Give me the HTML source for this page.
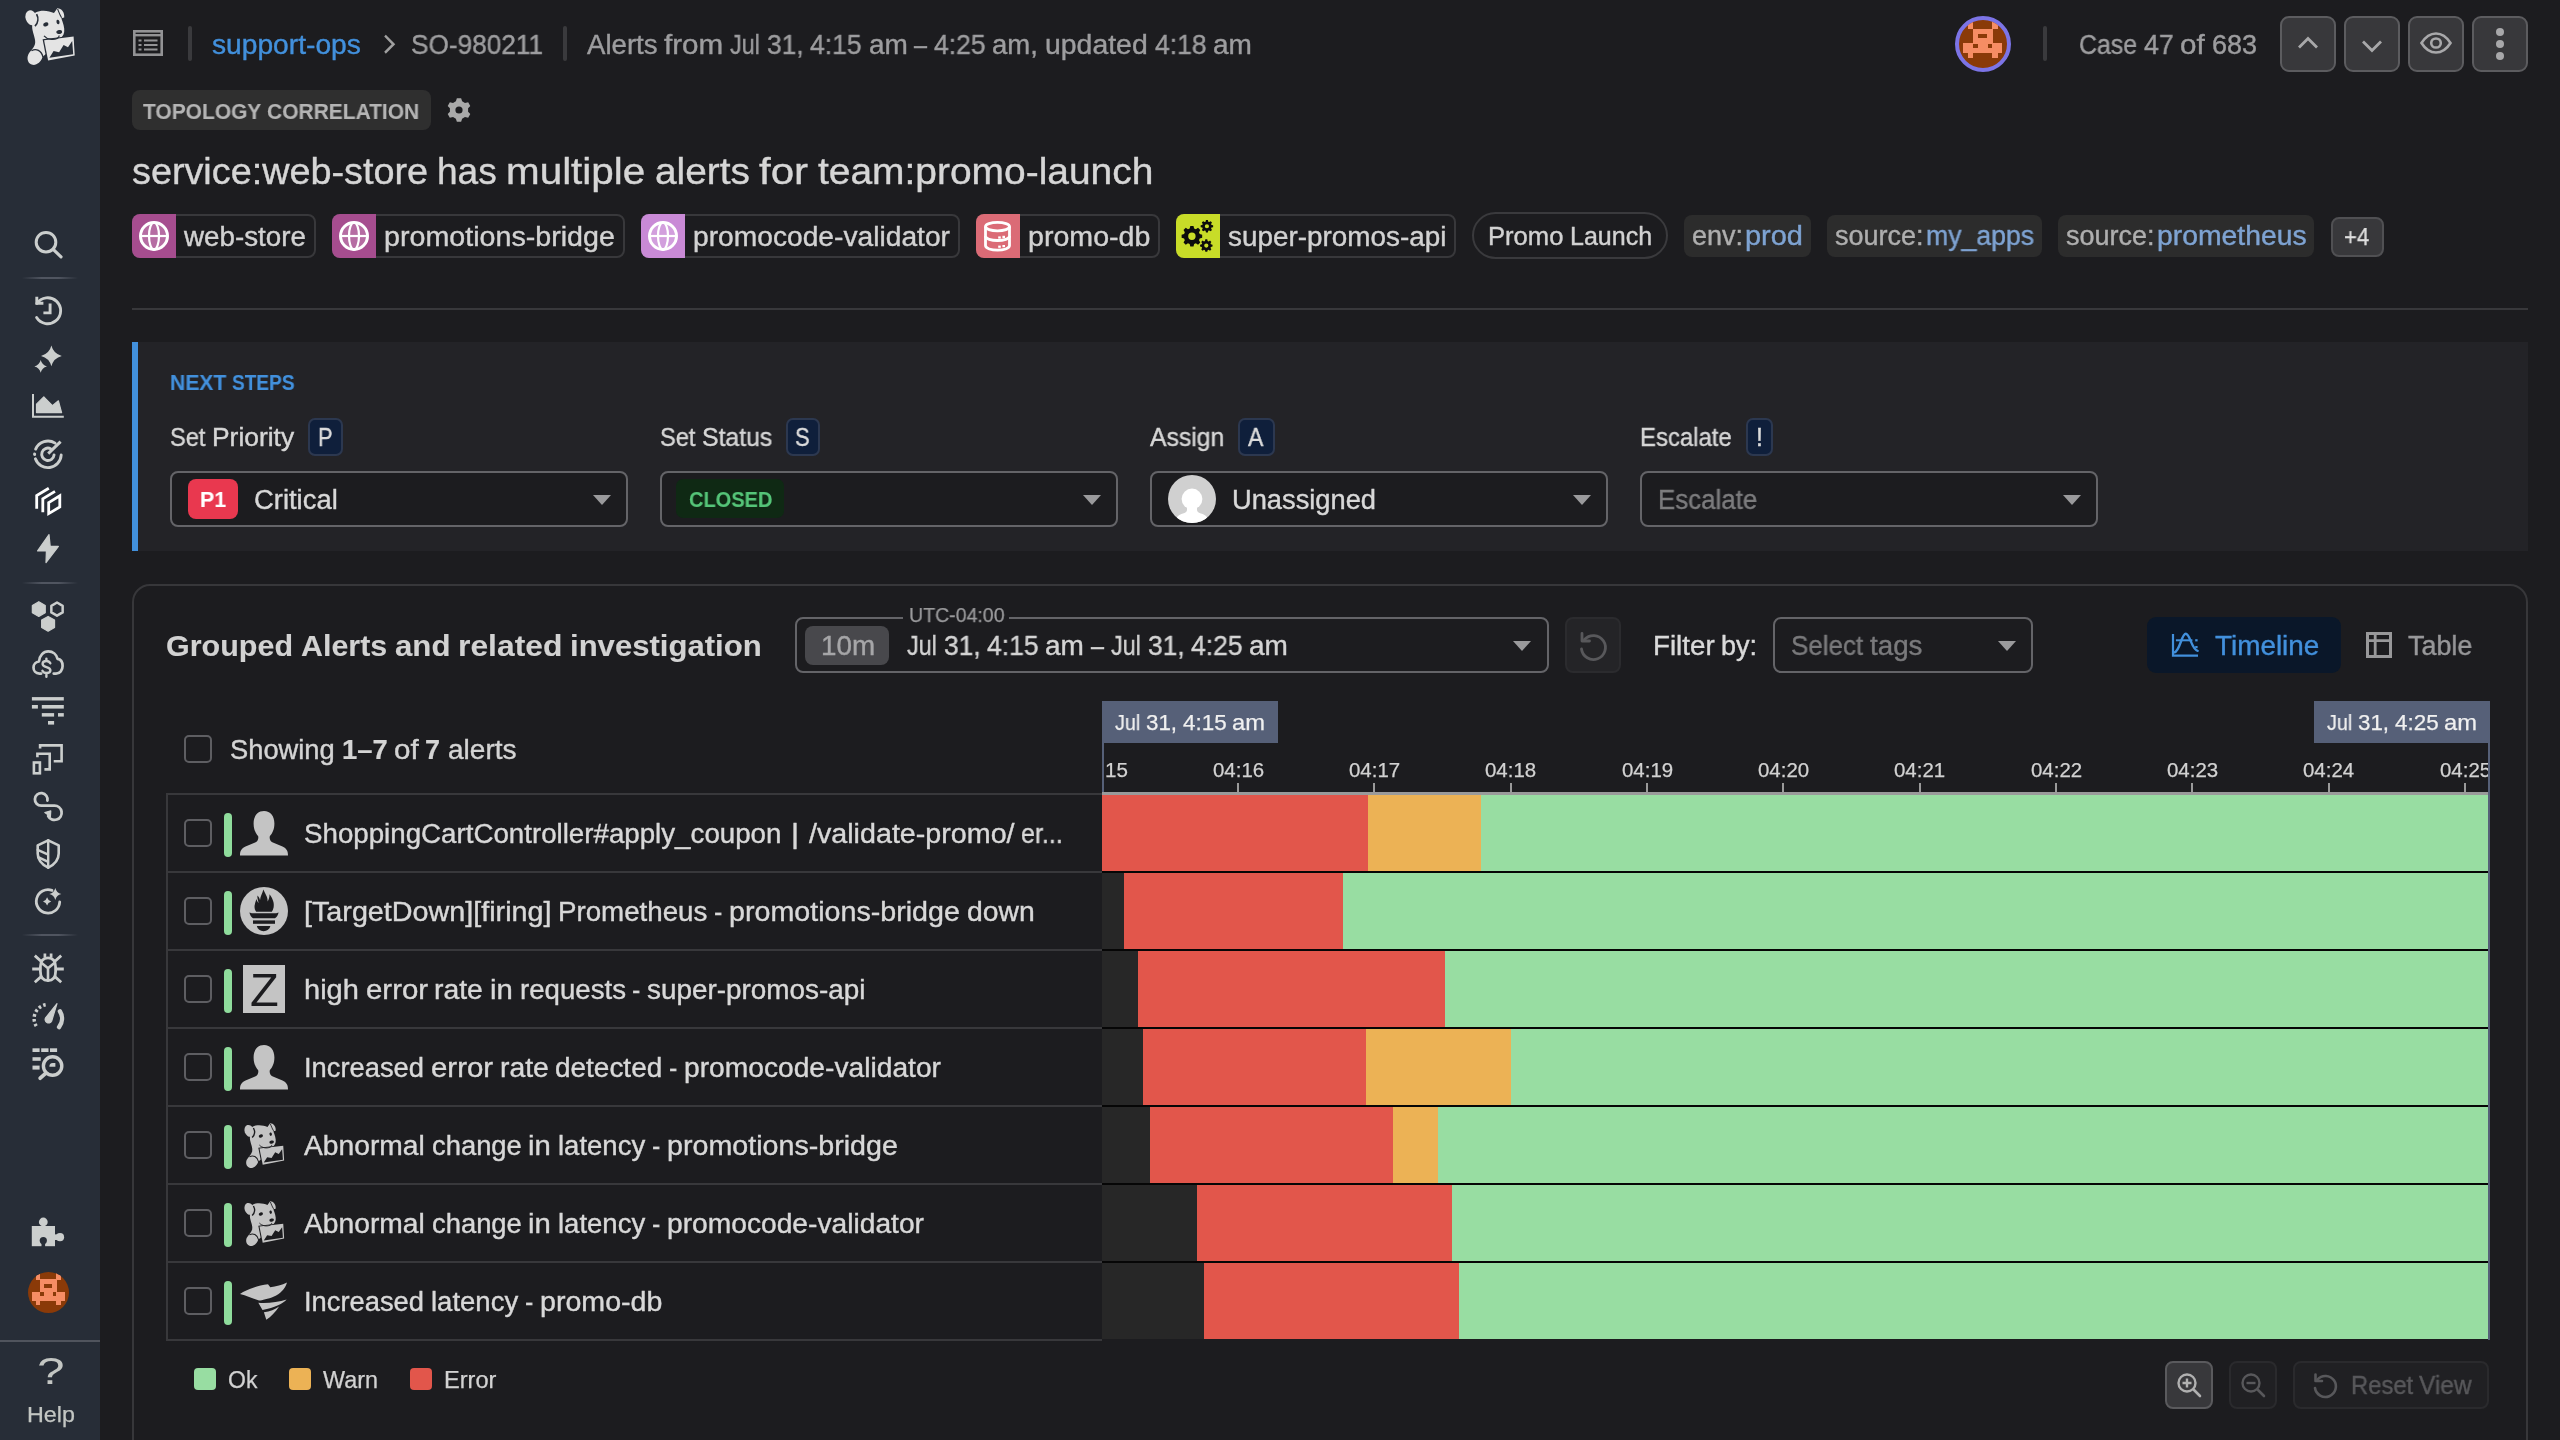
<!DOCTYPE html>
<html lang="en"><head><meta charset="utf-8"><title>Case SO-980211</title><style>
html,body{margin:0;padding:0;background:#1c1c1f;}
body{width:2560px;height:1440px;overflow:hidden;position:relative;font-family:"Liberation Sans",sans-serif;}
.t{position:absolute;white-space:nowrap;line-height:1;will-change:transform;-webkit-text-stroke:0.4px currentColor;}
.t b{-webkit-text-stroke:0.2px currentColor;}
.b{position:absolute;box-sizing:border-box;}
svg{overflow:visible;}
</style></head><body>
<div class="b" style="left:0px;top:0px;width:100px;height:1440px;background:#272d37;"></div>
<svg style="position:absolute;left:0;top:0" width="100" height="1440" viewBox="0 0 100 1440"><ellipse cx="31.3" cy="17.8" rx="5.7" ry="7.7" transform="rotate(-18 31.3 17.8)" fill="#e4e4e4"></ellipse><path d="M35.5 12.5 C41 9.5 49 10.5 54 13 L57.3 8.3 C61.5 8.3 64.8 12.5 64.2 17.6 L61.3 18.3 C63 23 64.8 28 64.2 32 C63.6 36 61 38.2 58 38.6 L47 41 L48 52 L42.5 57 C41 62 36.5 65.6 32.5 64.8 C28.3 64 26.3 59 28.3 54.5 C30 51 33.5 49 35 44 C36 40 33.5 35 32.5 30 C31.5 25 33 17 35.5 12.5 Z" fill="#e4e4e4"></path><path d="M36.6 14.2 C38.6 18 38.2 23 35 26.2" stroke="#272d37" stroke-width="1.7" fill="none"></path><path d="M31.5 50.8 C36 47.8 41.5 50.5 43 57" stroke="#272d37" stroke-width="1.3" fill="none"></path><path d="M57.6 9 C58.6 11.5 59.6 14.5 61.6 17.8" stroke="#272d37" stroke-width="1.1" fill="none"></path><path d="M42.6 39.2 L74.2 35.6 L75.4 56 L47 61.8 Z" fill="#272d37"></path><path d="M44.1 40.2 L73.6 36.6 L74.7 55.4 L48.1 60.6 Z" fill="#e4e4e4"></path><path d="M49.4 57.8 L53.6 51.1 L59.1 52.2 L63.6 45 L68 47.2 L72.2 41.1 L73.2 54.3 Z" fill="#272d37"></path><ellipse cx="45.8" cy="24.4" rx="2.7" ry="2" transform="rotate(-20 45.8 24.4)" fill="#272d37"></ellipse><ellipse cx="58" cy="22" rx="1.5" ry="2.2" transform="rotate(-15 58 22)" fill="#272d37"></ellipse><ellipse cx="59.2" cy="32" rx="2.9" ry="2" transform="rotate(-12 59.2 32)" fill="#272d37"></ellipse><path d="M44 35.8 C47 39.3 53 40.4 57.3 38.4 C58.6 37.8 59.2 36.8 59.2 35.6" stroke="#272d37" stroke-width="1.2" fill="none"></path><circle cx="46" cy="242.2" r="9.8" stroke="#cbcecd" fill="none" stroke-linecap="round" stroke-linejoin="round" stroke-width="3"></circle><path d="M53.2 249.4 L61 256.8" stroke="#cbcecd" fill="none" stroke-linecap="round" stroke-linejoin="round" stroke-width="3.2"></path><path d="M36.9 303.4 A13 13 0 1 1 36.6 317.6" stroke="#cbcecd" fill="none" stroke-linecap="round" stroke-linejoin="round" stroke-width="2.9"></path><path d="M36.8 296.8 V303.2 H43.4" stroke="#cbcecd" fill="none" stroke-linecap="butt" stroke-linejoin="miter" stroke-width="2.9"></path><path d="M50.1 303.4 V312.9 H43.4" stroke="#cbcecd" fill="none" stroke-linecap="butt" stroke-linejoin="miter" stroke-width="2.9"></path><path d="M51.4 345.5 Q53.48 353.82 61.8 355.9 Q53.48 357.98 51.4 366.29999999999995 Q49.32 357.98 41.0 355.9 Q49.32 353.82 51.4 345.5 Z" fill="#cbcecd" stroke="none"></path><path d="M40.7 360.09999999999997 Q41.96 365.14 47.0 366.4 Q41.96 367.66 40.7 372.7 Q39.44 367.66 34.400000000000006 366.4 Q39.44 365.14 40.7 360.09999999999997 Z" fill="#cbcecd" stroke="none"></path><path d="M33 393.9 V416.7 H63.8" stroke="#cbcecd" fill="none" stroke-linecap="butt" stroke-linejoin="miter" stroke-width="2"></path><path d="M36.5 412.6 V404.2 L43.8 396.8 L52.4 405.6 L58.4 400.8 L61.6 412.6 Z" fill="#cbcecd" stroke="#cbcecd" stroke-width="1.2" stroke-linejoin="round"></path><path d="M61.18 455.00 A13.3 13.3 0 0 1 35.40 458.85" stroke="#cbcecd" fill="none" stroke-linecap="round" stroke-linejoin="round" stroke-width="2.9"></path><path d="M35.66 449.10 A13.3 13.3 0 0 1 55.14 443.15" stroke="#cbcecd" fill="none" stroke-linecap="round" stroke-linejoin="round" stroke-width="2.9"></path><path d="M34.60 454.53 A13.3 13.3 0 0 1 34.60 454.07" stroke="#cbcecd" fill="none" stroke-linecap="round" stroke-linejoin="round" stroke-width="3"></path><path d="M54.07 454.95 A6.2 6.2 0 1 1 50.62 448.73" stroke="#cbcecd" fill="none" stroke-linecap="round" stroke-linejoin="round" stroke-width="2.9"></path><path d="M48.199999999999996 453.7 L60.6 441.7" stroke="#cbcecd" fill="none" stroke-linecap="butt" stroke-linejoin="miter" stroke-width="3"></path><path d="M36.7 508.8 V495.6 L48.8 488.2" stroke="#ffffff" fill="none" stroke-linecap="butt" stroke-linejoin="miter" stroke-width="2.8"></path><path d="M42.8 512.2 V498.8 L55 491.4" stroke="#ffffff" fill="none" stroke-linecap="butt" stroke-linejoin="miter" stroke-width="2.8"></path><path d="M48.7 502.6 L59.8 495.8 V507 L48.7 513.6 Z" stroke="#ffffff" fill="none" stroke-linecap="butt" stroke-linejoin="miter" stroke-width="2.8"></path><path d="M49 534.6 L37.6 550.9 H46.4 L46 562.6 L58.4 546.4 H50.2 Z" fill="#cbcecd" stroke="#cbcecd" stroke-width="1.2" stroke-linejoin="round"></path><path d="M38.80 601.70 L45.25 605.40 L45.25 612.80 L38.80 616.50 L32.35 612.80 L32.35 605.40 Z" fill="#cbcecd" stroke="#cbcecd" stroke-width="1.2" stroke-linejoin="round"></path><path d="M57.00 602.50 L62.65 605.80 L62.65 612.40 L57.00 615.70 L51.35 612.40 L51.35 605.80 Z" stroke="#cbcecd" fill="none" stroke-linecap="round" stroke-linejoin="round" stroke-width="2.5"></path><path d="M48.10 616.40 L54.55 620.10 L54.55 627.50 L48.10 631.20 L41.65 627.50 L41.65 620.10 Z" fill="#cbcecd" stroke="#cbcecd" stroke-width="1.2" stroke-linejoin="round"></path><path d="M41.2 673.6 H39.5 C35.5 673.6 33.5 670.6 33.5 667.6 C33.5 664 36 661.8 39 661.5 C39.5 655.5 43.5 651.4 48.3 651.4 C53 651.4 56.5 654.5 57.5 658.8 C61 659.3 62.6 662.5 62.6 666 C62.6 670 60 673.6 56 673.6 H53.7" stroke="#cbcecd" fill="none" stroke-linecap="round" stroke-linejoin="round" stroke-width="2.7"></path><path d="M50.3 663.3 C49.5 661.6 48 661 46.4 661 C44 661 42.6 662.3 42.6 664 C42.6 668 50.4 666.1 50.4 670.2 C50.4 672 48.8 673 46.4 673 C44.6 673 43.2 672.3 42.4 670.8 M46.4 658.6 V661 M46.4 673 V676.8" stroke="#cbcecd" fill="none" stroke-linecap="round" stroke-linejoin="round" stroke-width="2.4"></path><rect x="31.9" y="697.1" width="31.9" height="3.4" fill="#cbcecd" stroke="none"></rect><rect x="31.9" y="705" width="6.0" height="3.6" fill="#cbcecd" stroke="none"></rect><rect x="41.8" y="705" width="22.0" height="3.6" fill="#cbcecd" stroke="none"></rect><rect x="41.8" y="713.1" width="12.3" height="3.5" fill="#cbcecd" stroke="none"></rect><rect x="58" y="713.1" width="5.8" height="3.5" fill="#cbcecd" stroke="none"></rect><rect x="48" y="721" width="6.1" height="3.6" fill="#cbcecd" stroke="none"></rect><path d="M40.1 748.6 V745.4 H61.6 V761.3 H53.7" stroke="#cbcecd" fill="none" stroke-linecap="butt" stroke-linejoin="miter" stroke-width="2.6"></path><path d="M37.4 757.3 V753.8 H49.7 V769.4 H44.4" stroke="#cbcecd" fill="none" stroke-linecap="butt" stroke-linejoin="miter" stroke-width="2.6"></path><rect x="33.9" y="762.5" width="6" height="10.8" stroke="#cbcecd" fill="none" stroke-linecap="butt" stroke-linejoin="miter" stroke-width="2.6"></rect><path d="M47.4 800.6 A6.3 6.3 0 1 0 41.2 805.7 H54.4 A7.1 7.1 0 1 1 48.2 816" stroke="#cbcecd" fill="none" stroke-linecap="round" stroke-linejoin="round" stroke-width="2.8"></path><path d="M44.8 812.6 L50.8 810.8 L50.4 816.6 Z" fill="#cbcecd" stroke="#cbcecd" stroke-width="1.2" stroke-linejoin="round"></path><path d="M48.2 840.3 L58.7 845.4 V853.5 C58.7 860 54.5 864.5 48.2 867.7 C41.9 864.5 37.7 860 37.7 853.5 V845.4 Z" stroke="#cbcecd" fill="none" stroke-linecap="round" stroke-linejoin="round" stroke-width="2.6"></path><path d="M48.2 840.3 V867.7 M37.7 849.8 L48.2 854.6 M38.2 857.2 L48.2 861.9" stroke="#cbcecd" fill="none" stroke-linecap="round" stroke-linejoin="round" stroke-width="2.4"></path><path d="M52 890.4 A11.7 11.7 0 1 0 59.7 902" stroke="#cbcecd" fill="none" stroke-linecap="round" stroke-linejoin="round" stroke-width="2.8"></path><path d="M55.3 888.1 Q56.50 892.90 61.3 894.1 Q56.50 895.30 55.3 900.1 Q54.10 895.30 49.3 894.1 Q54.10 892.90 55.3 888.1 Z" fill="#cbcecd" stroke="none"></path><path d="M47.1 897.3 Q47.92 900.58 51.2 901.4 Q47.92 902.22 47.1 905.5 Q46.28 902.22 43.0 901.4 Q46.28 900.58 47.1 897.3 Z" fill="#cbcecd" stroke="none"></path><path d="M48 957.9 C53 957.9 55.6 961.5 55.6 967 V971.5 C55.6 977 53 980.6 48 980.6 C43 980.6 40.4 977 40.4 971.5 V967 C40.4 961.5 43 957.9 48 957.9 Z" stroke="#cbcecd" fill="none" stroke-linecap="round" stroke-linejoin="round" stroke-width="2.8"></path><path d="M42.2 963.4 L48 968.2 L53.8 963.4 M48 968.2 V980.4" stroke="#cbcecd" fill="none" stroke-linecap="round" stroke-linejoin="round" stroke-width="2.6"></path><path d="M44.9 953.4 V957.6 M51.1 953.4 V957.6" stroke="#cbcecd" fill="none" stroke-linecap="butt" stroke-linejoin="miter" stroke-width="2.7"></path><path d="M34.8 955.6 L41.6 961.8 M61.2 955.6 L54.4 961.8 M32.2 969 H39.6 M56.4 969 H63.8 M34.8 982.3 L41.4 976.4 M61.2 982.3 L54.6 976.4" stroke="#cbcecd" fill="none" stroke-linecap="butt" stroke-linejoin="miter" stroke-width="2.8"></path><path d="M36.24 1026.07 A14.1 14.1 0 0 1 46.24 1004.64" stroke="#cbcecd" fill="none" stroke-linecap="butt" stroke-linejoin="miter" stroke-width="3.4" stroke-dasharray="2.6 2.3"></path><path d="M59.90 1011.29 A13.8 13.8 0 0 1 59.07 1027.10" stroke="#cbcecd" fill="none" stroke-linecap="round" stroke-linejoin="round" stroke-width="4.4"></path><path d="M57 1003.6 L51.6 1021.2 A3.4 3.4 0 1 1 45.6 1017.8 Z" fill="#cbcecd" stroke="#cbcecd" stroke-width="1.2" stroke-linejoin="round"></path><rect x="32.5" y="1048.3" width="7.1" height="3.7" fill="#cbcecd" stroke="none"></rect><rect x="41.2" y="1048.3" width="7.3" height="3.7" fill="#cbcecd" stroke="none"></rect><rect x="50" y="1048.3" width="7.1" height="3.7" fill="#cbcecd" stroke="none"></rect><rect x="32.5" y="1057.2" width="8.2" height="3.6" fill="#cbcecd" stroke="none"></rect><rect x="32.5" y="1065.6" width="7.1" height="4.0" fill="#cbcecd" stroke="none"></rect><circle cx="52.6" cy="1066" r="9.2" stroke="#cbcecd" fill="none" stroke-linecap="round" stroke-linejoin="round" stroke-width="3.4"></circle><path d="M45.6 1073.4 L40.2 1078.2" stroke="#cbcecd" fill="none" stroke-linecap="round" stroke-linejoin="round" stroke-width="3.8"></path><path d="M49.4 1066.8 A3.6 3.6 0 0 1 52.8 1063 H55.4 V1066.8 Z" fill="#cbcecd" stroke="none"></path><rect x="31.8" y="1226" width="23.2" height="20.2" fill="#cbcecd" stroke="none"></rect><circle cx="43.3" cy="1222" r="4.4" fill="#cbcecd" stroke="none"></circle><circle cx="60" cy="1237.2" r="4.1" fill="#cbcecd" stroke="none"></circle><rect x="54" y="1234.4" width="4" height="5.6" fill="#cbcecd" stroke="none"></rect><circle cx="43.3" cy="1240.6" r="3.6" fill="#272d37"></circle><rect x="41.5" y="1241" width="3.6" height="6" fill="#272d37"></rect></svg>
<div class="b" style="left:22px;top:277px;width:56px;height:2px;background:linear-gradient(90deg,rgba(80,85,96,0),rgba(80,85,96,1) 35%,rgba(80,85,96,1) 65%,rgba(80,85,96,0));"></div>
<div class="b" style="left:22px;top:582px;width:56px;height:2px;background:linear-gradient(90deg,rgba(80,85,96,0),rgba(80,85,96,1) 35%,rgba(80,85,96,1) 65%,rgba(80,85,96,0));"></div>
<div class="b" style="left:22px;top:934px;width:56px;height:2px;background:linear-gradient(90deg,rgba(80,85,96,0),rgba(80,85,96,1) 35%,rgba(80,85,96,1) 65%,rgba(80,85,96,0));"></div>
<div class="b" style="left:27.5px;top:1271.5px;width:41px;height:41px;background:#8a3a08;border-radius:50%;overflow:hidden;"><svg width="41" height="41" viewBox="0 0 41 41" shape-rendering="crispEdges" style="position:absolute;left:0;top:0"><rect x="7.72" y="-0.85" width="4.63" height="4.63" fill="#f68d64"></rect><rect x="28.39" y="-0.85" width="4.63" height="4.63" fill="#f68d64"></rect><rect x="7.72" y="3.28" width="4.63" height="4.63" fill="#f68d64"></rect><rect x="28.39" y="3.28" width="4.63" height="4.63" fill="#f68d64"></rect><rect x="11.86" y="7.41" width="4.63" height="4.63" fill="#f68d64"></rect><rect x="15.99" y="7.41" width="4.63" height="4.63" fill="#f68d64"></rect><rect x="20.12" y="7.41" width="4.63" height="4.63" fill="#f68d64"></rect><rect x="24.26" y="7.41" width="4.63" height="4.63" fill="#f68d64"></rect><rect x="11.86" y="11.55" width="4.63" height="4.63" fill="#f68d64"></rect><rect x="24.26" y="11.55" width="4.63" height="4.63" fill="#f68d64"></rect><rect x="11.86" y="15.68" width="4.63" height="4.63" fill="#f68d64"></rect><rect x="15.99" y="15.68" width="4.63" height="4.63" fill="#f68d64"></rect><rect x="20.12" y="15.68" width="4.63" height="4.63" fill="#f68d64"></rect><rect x="24.26" y="15.68" width="4.63" height="4.63" fill="#f68d64"></rect><rect x="3.59" y="19.82" width="4.63" height="4.63" fill="#f68d64"></rect><rect x="7.72" y="19.82" width="4.63" height="4.63" fill="#f68d64"></rect><rect x="15.99" y="19.82" width="4.63" height="4.63" fill="#f68d64"></rect><rect x="20.12" y="19.82" width="4.63" height="4.63" fill="#f68d64"></rect><rect x="28.39" y="19.82" width="4.63" height="4.63" fill="#f68d64"></rect><rect x="32.53" y="19.82" width="4.63" height="4.63" fill="#f68d64"></rect><rect x="3.59" y="23.95" width="4.63" height="4.63" fill="#f68d64"></rect><rect x="7.72" y="23.95" width="4.63" height="4.63" fill="#f68d64"></rect><rect x="11.86" y="23.95" width="4.63" height="4.63" fill="#f68d64"></rect><rect x="15.99" y="23.95" width="4.63" height="4.63" fill="#f68d64"></rect><rect x="20.12" y="23.95" width="4.63" height="4.63" fill="#f68d64"></rect><rect x="24.26" y="23.95" width="4.63" height="4.63" fill="#f68d64"></rect><rect x="28.39" y="23.95" width="4.63" height="4.63" fill="#f68d64"></rect><rect x="32.53" y="23.95" width="4.63" height="4.63" fill="#f68d64"></rect><rect x="7.72" y="28.08" width="4.63" height="4.63" fill="#f68d64"></rect><rect x="28.39" y="28.08" width="4.63" height="4.63" fill="#f68d64"></rect></svg></div>
<div class="b" style="left:0px;top:1340px;width:100px;height:2px;background:#50545d;"></div>
<span class="t" style="left: 36.6px; font-size: 36px; color: rgb(195, 198, 195); font-weight: 400; -webkit-text-stroke: 0px; top: 1353.5px; transform-origin: 0px 50%; transform: scaleX(1.373);">?</span>
<span class="t" style="left: 27px; top: 1404px; font-size: 22px; color: rgb(195, 198, 195); font-weight: 400; -webkit-text-stroke: 0.25px currentcolor; transform-origin: 0px 50%; transform: scaleX(1.059);">Help</span>
<svg style="position:absolute;left:133px;top:30px;color:#939395;" width="30" height="26" viewBox="0 0 30 26" preserveAspectRatio="none" fill="none" stroke="none"><rect x="1.3" y="1.3" width="27.4" height="23.4" stroke="currentColor" stroke-width="2.6" fill="none"></rect><path d="M1.5 5.2 H28.5" stroke="currentColor" stroke-width="2.4"></path><path d="M5.5 10.5 H8.5 M11 10.5 H24.5 M5.5 15 H8.5 M11 15 H24.5 M5.5 19.5 H8.5 M11 19.5 H24.5" stroke="currentColor" stroke-width="2.2"></path></svg>
<div class="b" style="left:188px;top:26px;width:4px;height:35px;background:#3a3a3d;border-radius:2px;"></div>
<span class="t" style="left: 212px; top: 32px; font-size: 27px; color: rgb(66, 144, 220); font-weight: 400; -webkit-text-stroke: 0.4px currentcolor; transform-origin: 0px 50%; transform: scaleX(1.044);">support-ops</span>
<svg style="position:absolute;left:383px;top:34.3px;color:#c3c6c3;" width="12" height="20.4" viewBox="0 0 12 19" preserveAspectRatio="none" fill="none" stroke="none"><path d="M2 1.5 L10.5 9.5 L2 17.5" stroke="#a0a0a0" stroke-width="2.4" fill="none" stroke-linecap="butt"></path></svg>
<span class="t" style="left: 411px; top: 32px; font-size: 27px; color: rgb(157, 157, 159); font-weight: 400; -webkit-text-stroke: 0.4px currentcolor; transform-origin: 0px 50%; transform: scaleX(0.971);">SO-980211</span>
<div class="b" style="left:563px;top:26px;width:4px;height:35px;background:#3a3a3d;border-radius:2px;"></div>
<span class="t" style="left: 587px; top: 32px; font-size: 27px; color: rgb(157, 157, 159); font-weight: 400; -webkit-text-stroke: 0.4px currentcolor; transform-origin: 0px 50%; transform: scaleX(1.022);">Alerts</span><span class="t" style="left: 664.31px; top: 32px; font-size: 27px; color: rgb(157, 157, 159); font-weight: 400; -webkit-text-stroke: 0.4px currentcolor; transform-origin: 0px 50%; transform: scaleX(1.097);">from</span><span class="t" style="left: 730.28px; top: 32px; font-size: 27px; color: rgb(157, 157, 159); font-weight: 400; -webkit-text-stroke: 0.4px currentcolor; transform-origin: 0px 50%; transform: scaleX(0.866);">Jul</span><span class="t" style="left: 766.91px; top: 32px; font-size: 27px; color: rgb(157, 157, 159); font-weight: 400; -webkit-text-stroke: 0.4px currentcolor; transform-origin: 0px 50%; transform: scaleX(0.978);">31,</span><span class="t" style="left: 810.39px; top: 32px; font-size: 27px; color: rgb(157, 157, 159); font-weight: 400; -webkit-text-stroke: 0.4px currentcolor; transform-origin: 0px 50%; transform: scaleX(0.982);">4:15</span><span class="t" style="left: 868.73px; top: 32px; font-size: 27px; color: rgb(157, 157, 159); font-weight: 400; -webkit-text-stroke: 0.4px currentcolor; transform-origin: 0px 50%; transform: scaleX(1.037);">am</span><span class="t" style="left: 914.39px; top: 32px; font-size: 27px; color: rgb(157, 157, 159); font-weight: 400; -webkit-text-stroke: 0.4px currentcolor; transform-origin: 0px 50%; transform: scaleX(0.866);">–</span><span class="t" style="left: 934.14px; top: 32px; font-size: 27px; color: rgb(157, 157, 159); font-weight: 400; -webkit-text-stroke: 0.4px currentcolor; transform-origin: 0px 50%; transform: scaleX(0.982);">4:25</span><span class="t" style="left: 992.48px; top: 32px; font-size: 27px; color: rgb(157, 157, 159); font-weight: 400; -webkit-text-stroke: 0.4px currentcolor; transform-origin: 0px 50%; transform: scaleX(1.019);">am,</span><span class="t" style="left: 1045.11px; top: 32px; font-size: 27px; color: rgb(157, 157, 159); font-weight: 400; -webkit-text-stroke: 0.4px currentcolor; transform-origin: 0px 50%; transform: scaleX(1.052);">updated</span><span class="t" style="left: 1154.55px; top: 32px; font-size: 27px; color: rgb(157, 157, 159); font-weight: 400; -webkit-text-stroke: 0.4px currentcolor; transform-origin: 0px 50%; transform: scaleX(0.982);">4:18</span><span class="t" style="left: 1212.89px; top: 32px; font-size: 27px; color: rgb(157, 157, 159); font-weight: 400; -webkit-text-stroke: 0.4px currentcolor; transform-origin: 0px 50%; transform: scaleX(1.037);">am</span>
<div class="b" style="left:1955.0px;top:16.0px;width:56px;height:56px;background:#8a3a08;border-radius:50%;overflow:hidden;border:4px solid #7c74e6;"><svg width="48" height="48" viewBox="0 0 48 48" shape-rendering="crispEdges" style="position:absolute;left:0;top:0"><rect x="9.04" y="-1.00" width="5.34" height="5.34" fill="#f68d64"></rect><rect x="33.24" y="-1.00" width="5.34" height="5.34" fill="#f68d64"></rect><rect x="9.04" y="3.84" width="5.34" height="5.34" fill="#f68d64"></rect><rect x="33.24" y="3.84" width="5.34" height="5.34" fill="#f68d64"></rect><rect x="13.88" y="8.68" width="5.34" height="5.34" fill="#f68d64"></rect><rect x="18.72" y="8.68" width="5.34" height="5.34" fill="#f68d64"></rect><rect x="23.56" y="8.68" width="5.34" height="5.34" fill="#f68d64"></rect><rect x="28.40" y="8.68" width="5.34" height="5.34" fill="#f68d64"></rect><rect x="13.88" y="13.52" width="5.34" height="5.34" fill="#f68d64"></rect><rect x="28.40" y="13.52" width="5.34" height="5.34" fill="#f68d64"></rect><rect x="13.88" y="18.36" width="5.34" height="5.34" fill="#f68d64"></rect><rect x="18.72" y="18.36" width="5.34" height="5.34" fill="#f68d64"></rect><rect x="23.56" y="18.36" width="5.34" height="5.34" fill="#f68d64"></rect><rect x="28.40" y="18.36" width="5.34" height="5.34" fill="#f68d64"></rect><rect x="4.20" y="23.20" width="5.34" height="5.34" fill="#f68d64"></rect><rect x="9.04" y="23.20" width="5.34" height="5.34" fill="#f68d64"></rect><rect x="18.72" y="23.20" width="5.34" height="5.34" fill="#f68d64"></rect><rect x="23.56" y="23.20" width="5.34" height="5.34" fill="#f68d64"></rect><rect x="33.24" y="23.20" width="5.34" height="5.34" fill="#f68d64"></rect><rect x="38.08" y="23.20" width="5.34" height="5.34" fill="#f68d64"></rect><rect x="4.20" y="28.04" width="5.34" height="5.34" fill="#f68d64"></rect><rect x="9.04" y="28.04" width="5.34" height="5.34" fill="#f68d64"></rect><rect x="13.88" y="28.04" width="5.34" height="5.34" fill="#f68d64"></rect><rect x="18.72" y="28.04" width="5.34" height="5.34" fill="#f68d64"></rect><rect x="23.56" y="28.04" width="5.34" height="5.34" fill="#f68d64"></rect><rect x="28.40" y="28.04" width="5.34" height="5.34" fill="#f68d64"></rect><rect x="33.24" y="28.04" width="5.34" height="5.34" fill="#f68d64"></rect><rect x="38.08" y="28.04" width="5.34" height="5.34" fill="#f68d64"></rect><rect x="9.04" y="32.88" width="5.34" height="5.34" fill="#f68d64"></rect><rect x="33.24" y="32.88" width="5.34" height="5.34" fill="#f68d64"></rect></svg></div>
<div class="b" style="left:2043px;top:26px;width:4px;height:35px;background:#3a3a3d;border-radius:2px;"></div>
<span class="t" style="left: 2079px; top: 32px; font-size: 27px; color: rgb(157, 157, 159); font-weight: 400; -webkit-text-stroke: 0.4px currentcolor; transform-origin: 0px 50%; transform: scaleX(0.922);">Case</span><span class="t" style="left: 2143.89px; top: 32px; font-size: 27px; color: rgb(157, 157, 159); font-weight: 400; -webkit-text-stroke: 0.4px currentcolor; transform-origin: 0px 50%; transform: scaleX(0.99);">47</span><span class="t" style="left: 2180.39px; top: 32px; font-size: 27px; color: rgb(157, 157, 159); font-weight: 400; -webkit-text-stroke: 0.4px currentcolor; transform-origin: 0px 50%; transform: scaleX(1.096);">of</span><span class="t" style="left: 2211.83px; top: 32px; font-size: 27px; color: rgb(157, 157, 159); font-weight: 400; -webkit-text-stroke: 0.4px currentcolor; transform-origin: 0px 50%; transform: scaleX(0.99);">683</span>
<div class="b" style="left:2280px;top:16px;width:56px;height:56px;background:#38383b;border:2px solid #5c5c5f;border-radius:9px;"></div>
<div class="b" style="left:2344px;top:16px;width:56px;height:56px;background:#38383b;border:2px solid #5c5c5f;border-radius:9px;"></div>
<div class="b" style="left:2408px;top:16px;width:56px;height:56px;background:#38383b;border:2px solid #5c5c5f;border-radius:9px;"></div>
<div class="b" style="left:2472px;top:16px;width:56px;height:56px;background:#38383b;border:2px solid #5c5c5f;border-radius:9px;"></div>
<svg style="position:absolute;left:2297px;top:36px;color:#c3c6c3;" width="22" height="14" viewBox="0 0 22 14" preserveAspectRatio="none" fill="none" stroke="none"><path d="M2 11.5 L11 2.5 L20 11.5" stroke="#a8a8aa" stroke-width="2.8" fill="none"></path></svg>
<svg style="position:absolute;left:2361px;top:38.5px;color:#c3c6c3;" width="22" height="14" viewBox="0 0 22 14" preserveAspectRatio="none" fill="none" stroke="none"><path d="M2 2.5 L11 11.5 L20 2.5" stroke="#a8a8aa" stroke-width="2.8" fill="none"></path></svg>
<svg style="position:absolute;left:2420px;top:31.5px;color:#c3c6c3;" width="32" height="22" viewBox="0 0 32 23" preserveAspectRatio="none" fill="none" stroke="none"><path d="M1.5 11.5 C6 4 11 1.5 16 1.5 C21 1.5 26 4 30.5 11.5 C26 19 21 21.5 16 21.5 C11 21.5 6 19 1.5 11.5 Z" stroke="#a8a8aa" stroke-width="2.6" fill="none"></path><circle cx="16" cy="11.5" r="4.8" stroke="#a8a8aa" stroke-width="2.6" fill="none"></circle></svg>
<svg style="position:absolute;left:2496px;top:28px;color:#c3c6c3;" width="8" height="32" viewBox="0 0 8 32" preserveAspectRatio="none" fill="none" stroke="none"><circle cx="4" cy="4" r="4" fill="#a8a8aa"></circle><circle cx="4" cy="16" r="4" fill="#a8a8aa"></circle><circle cx="4" cy="28" r="4" fill="#a8a8aa"></circle></svg>
<div class="b" style="left:132px;top:90px;width:299px;height:40px;background:#2f2f2f;border-radius:8px;"></div>
<span class="t" style="left: 143px; top: 101px; font-size: 22px; color: rgb(180, 180, 180); font-weight: 700; -webkit-text-stroke: 0.1px currentcolor; transform-origin: 0px 50%; transform: scaleX(0.952);">TOPOLOGY</span><span class="t" style="left: 267.08px; top: 101px; font-size: 22px; color: rgb(180, 180, 180); font-weight: 700; -webkit-text-stroke: 0.1px currentcolor; transform-origin: 0px 50%; transform: scaleX(0.953);">CORRELATION</span>
<svg style="position:absolute;left:447.1px;top:98px;color:#c3c6c3;" width="24" height="24" viewBox="0 0 24 24" preserveAspectRatio="none" fill="none" stroke="none"><path d="M15.13 20.69 L14.13 23.81 L9.87 23.81 L8.87 20.69 L6.04 19.06 L2.83 19.75 L0.71 16.06 L2.91 13.64 L2.91 10.36 L0.71 7.94 L2.83 4.25 L6.04 4.94 L8.87 3.31 L9.87 0.19 L14.13 0.19 L15.13 3.31 L17.96 4.94 L21.17 4.25 L23.29 7.94 L21.09 10.36 L21.09 13.64 L23.29 16.06 L21.17 19.75 L17.96 19.06 Z M15.60 12.00 A3.60 3.60 0 1 0 8.40 12.00 A3.60 3.60 0 1 0 15.60 12.00 Z" fill="#a9a9a9" fill-rule="evenodd"></path></svg>
<span class="t" style="left: 132px; top: 153px; font-size: 37px; color: rgb(214, 214, 214); font-weight: 400; -webkit-text-stroke: 0.4px currentcolor; transform-origin: 0px 50%; transform: scaleX(1.021);">service:web-store</span><span class="t" style="left: 437.38px; top: 153px; font-size: 37px; color: rgb(214, 214, 214); font-weight: 400; -webkit-text-stroke: 0.4px currentcolor; transform-origin: 0px 50%; transform: scaleX(1.001);">has</span><span class="t" style="left: 506.42px; top: 153px; font-size: 37px; color: rgb(214, 214, 214); font-weight: 400; -webkit-text-stroke: 0.4px currentcolor; transform-origin: 0px 50%; transform: scaleX(1.092);">multiple</span><span class="t" style="left: 655px; top: 153px; font-size: 37px; color: rgb(214, 214, 214); font-weight: 400; -webkit-text-stroke: 0.4px currentcolor; transform-origin: 0px 50%; transform: scaleX(1.049);">alerts</span><span class="t" style="left: 759.25px; top: 153px; font-size: 37px; color: rgb(214, 214, 214); font-weight: 400; -webkit-text-stroke: 0.4px currentcolor; transform-origin: 0px 50%; transform: scaleX(1.136);">for</span><span class="t" style="left: 817.66px; top: 153px; font-size: 37px; color: rgb(214, 214, 214); font-weight: 400; -webkit-text-stroke: 0.4px currentcolor; transform-origin: 0px 50%; transform: scaleX(1.052);">team:promo-launch</span>
<div class="b" style="left:132px;top:214px;width:184px;height:44px;border:2px solid #38383b;border-radius:8px;"></div>
<div class="b" style="left:132px;top:214px;width:44px;height:44px;background:#a64d8f;border-radius:8px 0 0 8px;"></div>
<svg style="position:absolute;left:138px;top:220px;color:#c3c6c3;" width="32" height="32" viewBox="0 0 32 32" preserveAspectRatio="none" fill="none" stroke="none"><circle cx="16" cy="16" r="13.5" stroke="#fff" stroke-width="3" fill="rgba(255,255,255,0.18)"></circle><ellipse cx="16" cy="16" rx="5" ry="13.5" stroke="#fff" stroke-width="2.2" fill="none"></ellipse><path d="M2.5 16 H29.5" stroke="#fff" stroke-width="2.2"></path></svg>
<span class="t" style="left: 184px; top: 224px; font-size: 27px; color: rgb(210, 210, 210); font-weight: 400; -webkit-text-stroke: 0.4px currentcolor; transform-origin: 0px 50%; transform: scaleX(1.028);">web-store</span>
<div class="b" style="left:332px;top:214px;width:293px;height:44px;border:2px solid #38383b;border-radius:8px;"></div>
<div class="b" style="left:332px;top:214px;width:44px;height:44px;background:#a64d8f;border-radius:8px 0 0 8px;"></div>
<svg style="position:absolute;left:338px;top:220px;color:#c3c6c3;" width="32" height="32" viewBox="0 0 32 32" preserveAspectRatio="none" fill="none" stroke="none"><circle cx="16" cy="16" r="13.5" stroke="#fff" stroke-width="3" fill="rgba(255,255,255,0.18)"></circle><ellipse cx="16" cy="16" rx="5" ry="13.5" stroke="#fff" stroke-width="2.2" fill="none"></ellipse><path d="M2.5 16 H29.5" stroke="#fff" stroke-width="2.2"></path></svg>
<span class="t" style="left: 384px; top: 224px; font-size: 27px; color: rgb(210, 210, 210); font-weight: 400; -webkit-text-stroke: 0.4px currentcolor; transform-origin: 0px 50%; transform: scaleX(1.061);">promotions-bridge</span>
<div class="b" style="left:641px;top:214px;width:319px;height:44px;border:2px solid #38383b;border-radius:8px;"></div>
<div class="b" style="left:641px;top:214px;width:44px;height:44px;background:#c98ad6;border-radius:8px 0 0 8px;"></div>
<svg style="position:absolute;left:647px;top:220px;color:#c3c6c3;" width="32" height="32" viewBox="0 0 32 32" preserveAspectRatio="none" fill="none" stroke="none"><circle cx="16" cy="16" r="13.5" stroke="#fff" stroke-width="3" fill="rgba(255,255,255,0.18)"></circle><ellipse cx="16" cy="16" rx="5" ry="13.5" stroke="#fff" stroke-width="2.2" fill="none"></ellipse><path d="M2.5 16 H29.5" stroke="#fff" stroke-width="2.2"></path></svg>
<span class="t" style="left: 693px; top: 224px; font-size: 27px; color: rgb(210, 210, 210); font-weight: 400; -webkit-text-stroke: 0.4px currentcolor; transform-origin: 0px 50%; transform: scaleX(1.044);">promocode-validator</span>
<div class="b" style="left:976px;top:214px;width:184px;height:44px;border:2px solid #38383b;border-radius:8px;"></div>
<div class="b" style="left:976px;top:214px;width:44px;height:44px;background:#db6b76;border-radius:8px 0 0 8px;"></div>
<svg style="position:absolute;left:984.4px;top:220.6px;color:#c3c6c3;" width="27" height="31" viewBox="0 0 27 31" preserveAspectRatio="none" fill="none" stroke="none"><ellipse cx="13.5" cy="5.6" rx="12" ry="4.2" stroke="#fff" stroke-width="2.8" fill="none"></ellipse><path d="M1.5 5.6 V24.6 C1.5 30.6 25.5 30.6 25.5 24.6 V5.6" stroke="#fff" stroke-width="2.8" fill="none"></path><path d="M1.5 15 C1.5 21 25.5 21 25.5 15" stroke="#fff" stroke-width="2.8" fill="none"></path><rect x="14.2" y="15.4" width="2.6" height="2.2" fill="#fff"></rect><rect x="18.4" y="14.8" width="2.6" height="2.2" fill="#fff"></rect><rect x="14.2" y="24.6" width="2.6" height="2.2" fill="#fff"></rect><rect x="18.4" y="24" width="2.6" height="2.2" fill="#fff"></rect></svg>
<span class="t" style="left: 1028px; top: 224px; font-size: 27px; color: rgb(210, 210, 210); font-weight: 400; -webkit-text-stroke: 0.4px currentcolor; transform-origin: 0px 50%; transform: scaleX(1.059);">promo-db</span>
<div class="b" style="left:1176px;top:214px;width:280px;height:44px;border:2px solid #38383b;border-radius:8px;"></div>
<div class="b" style="left:1176px;top:214px;width:44px;height:44px;background:#c8dc28;border-radius:8px 0 0 8px;"></div>
<svg style="position:absolute;left:1181px;top:219px;color:#c3c6c3;" width="34" height="32" viewBox="0 0 34 32" preserveAspectRatio="none" fill="none" stroke="none"><path d="M18.70 15.02 L21.18 15.66 L21.18 18.84 L18.70 19.48 L17.99 21.19 L19.29 23.40 L17.05 25.64 L14.84 24.34 L13.13 25.05 L12.49 27.53 L9.31 27.53 L8.67 25.05 L6.96 24.34 L4.75 25.64 L2.51 23.40 L3.81 21.19 L3.10 19.48 L0.62 18.84 L0.62 15.66 L3.10 15.02 L3.81 13.31 L2.51 11.10 L4.75 8.86 L6.96 10.16 L8.67 9.45 L9.31 6.97 L12.49 6.97 L13.13 9.45 L14.84 10.16 L17.05 8.86 L19.29 11.10 L17.99 13.31 Z M14.60 17.25 A3.70 3.70 0 1 0 7.20 17.25 A3.70 3.70 0 1 0 14.60 17.25 Z" fill="#0c0c0c" fill-rule="evenodd"></path><path d="M30.50 5.93 L32.13 6.29 L32.13 8.21 L30.50 8.57 L30.09 9.57 L30.98 10.97 L29.62 12.33 L28.22 11.44 L27.22 11.85 L26.86 13.48 L24.94 13.48 L24.58 11.85 L23.58 11.44 L22.18 12.33 L20.82 10.97 L21.71 9.57 L21.30 8.57 L19.67 8.21 L19.67 6.29 L21.30 5.93 L21.71 4.93 L20.82 3.53 L22.18 2.17 L23.58 3.06 L24.58 2.65 L24.94 1.02 L26.86 1.02 L27.22 2.65 L28.22 3.06 L29.62 2.17 L30.98 3.53 L30.09 4.93 Z M28.00 7.25 A2.10 2.10 0 1 0 23.80 7.25 A2.10 2.10 0 1 0 28.00 7.25 Z" fill="#0c0c0c" fill-rule="evenodd"></path><path d="M29.90 25.28 L31.53 25.64 L31.53 27.56 L29.90 27.92 L29.49 28.92 L30.38 30.32 L29.02 31.68 L27.62 30.79 L26.62 31.20 L26.26 32.83 L24.34 32.83 L23.98 31.20 L22.98 30.79 L21.58 31.68 L20.22 30.32 L21.11 28.92 L20.70 27.92 L19.07 27.56 L19.07 25.64 L20.70 25.28 L21.11 24.28 L20.22 22.88 L21.58 21.52 L22.98 22.41 L23.98 22.00 L24.34 20.37 L26.26 20.37 L26.62 22.00 L27.62 22.41 L29.02 21.52 L30.38 22.88 L29.49 24.28 Z M27.40 26.60 A2.10 2.10 0 1 0 23.20 26.60 A2.10 2.10 0 1 0 27.40 26.60 Z" fill="#0c0c0c" fill-rule="evenodd"></path></svg>
<span class="t" style="left: 1228px; top: 224px; font-size: 27px; color: rgb(210, 210, 210); font-weight: 400; -webkit-text-stroke: 0.4px currentcolor; transform-origin: 0px 50%; transform: scaleX(1.032);">super-promos-api</span>
<div class="b" style="left:1472px;top:212px;width:196px;height:47px;border:2px solid #3a3a3d;border-radius:23.5px;"></div>
<span class="t" style="left: 1488px; top: 224px; font-size: 25px; color: rgb(210, 210, 210); font-weight: 400; -webkit-text-stroke: 0.4px currentcolor; transform-origin: 0px 50%; transform: scaleX(1.024);">Promo</span><span class="t" style="left: 1569.66px; top: 224px; font-size: 25px; color: rgb(210, 210, 210); font-weight: 400; -webkit-text-stroke: 0.4px currentcolor; transform-origin: 0px 50%; transform: scaleX(1.001);">Launch</span>
<div class="b" style="left:1684px;top:215px;width:127px;height:42px;background:#2c2c2c;border-radius:8px;"></div><span class="t" style="left: 1692px; top: 223px; font-size: 27px; color: rgb(174, 174, 174); font-weight: 400; -webkit-text-stroke: 0.4px currentcolor; transform-origin: 0px 50%; transform: scaleX(0.998);">env:</span><span class="t" style="left: 1744.92px; top: 223px; font-size: 27px; color: rgb(126, 163, 210); font-weight: 400; -webkit-text-stroke: 0.4px currentcolor; transform-origin: 0px 50%; transform: scaleX(1.072);">prod</span>
<div class="b" style="left:1827px;top:215px;width:215px;height:42px;background:#2c2c2c;border-radius:8px;"></div><span class="t" style="left: 1835px; top: 223px; font-size: 27px; color: rgb(174, 174, 174); font-weight: 400; -webkit-text-stroke: 0.4px currentcolor; transform-origin: 0px 50%; transform: scaleX(1.001);">source:</span><span class="t" style="left: 1925.59px; top: 223px; font-size: 27px; color: rgb(126, 163, 210); font-weight: 400; -webkit-text-stroke: 0.4px currentcolor; transform-origin: 0px 50%; transform: scaleX(0.987);">my_apps</span>
<div class="b" style="left:2058px;top:215px;width:256px;height:42px;background:#2c2c2c;border-radius:8px;"></div><span class="t" style="left: 2066px; top: 223px; font-size: 27px; color: rgb(174, 174, 174); font-weight: 400; -webkit-text-stroke: 0.4px currentcolor; transform-origin: 0px 50%; transform: scaleX(1.001);">source:</span><span class="t" style="left: 2156.59px; top: 223px; font-size: 27px; color: rgb(126, 163, 210); font-weight: 400; -webkit-text-stroke: 0.4px currentcolor; transform-origin: 0px 50%; transform: scaleX(1.049);">prometheus</span>
<div class="b" style="left:2331px;top:217px;width:53px;height:40px;background:#38383b;border:2px solid #505053;border-radius:8px;"></div>
<span class="t" style="left: 2344px; top: 226px; font-size: 23px; color: rgb(224, 224, 224); font-weight: 400; -webkit-text-stroke: 0.25px currentcolor; transform-origin: 0px 50%; transform: scaleX(0.959);">+4</span>
<div class="b" style="left:132px;top:308px;width:2396px;height:2px;background:#38383b;"></div>
<div class="b" style="left:132px;top:342px;width:2396px;height:209px;background:#232327;"></div>
<div class="b" style="left:132px;top:342px;width:6px;height:209px;background:#4290dc;"></div>
<span class="t" style="left: 170px; top: 371.5px; font-size: 22px; color: rgb(66, 144, 220); font-weight: 700; -webkit-text-stroke: 0.1px currentcolor; transform-origin: 0px 50%; transform: scaleX(0.959);">NEXT</span><span class="t" style="left: 231.98px; top: 371.5px; font-size: 22px; color: rgb(66, 144, 220); font-weight: 700; -webkit-text-stroke: 0.1px currentcolor; transform-origin: 0px 50%; transform: scaleX(0.867);">STEPS</span>
<span class="t" style="left: 170px; top: 425px; font-size: 25px; color: rgb(214, 214, 214); font-weight: 400; -webkit-text-stroke: 0.4px currentcolor; transform-origin: 0px 50%; transform: scaleX(0.943);">Set</span><span class="t" style="left: 211.61px; top: 425px; font-size: 25px; color: rgb(214, 214, 214); font-weight: 400; -webkit-text-stroke: 0.4px currentcolor; transform-origin: 0px 50%; transform: scaleX(1.056);">Priority</span>
<div class="b" style="left:308px;top:418px;width:35px;height:38px;background:#0f1f3b;border:2px solid #2c3850;border-radius:7px;"></div>
<span class="t" style="left: 318px; top: 425px; font-size: 25px; color: rgb(220, 220, 220); font-weight: 400; -webkit-text-stroke: 0.4px currentcolor; transform-origin: 0px 50%; transform: scaleX(0.871);">P</span>
<span class="t" style="left: 660px; top: 425px; font-size: 25px; color: rgb(214, 214, 214); font-weight: 400; -webkit-text-stroke: 0.4px currentcolor; transform-origin: 0px 50%; transform: scaleX(0.943);">Set</span><span class="t" style="left: 701.61px; top: 425px; font-size: 25px; color: rgb(214, 214, 214); font-weight: 400; -webkit-text-stroke: 0.4px currentcolor; transform-origin: 0px 50%; transform: scaleX(0.992);">Status</span>
<div class="b" style="left:786px;top:418px;width:34px;height:38px;background:#0f1f3b;border:2px solid #2c3850;border-radius:7px;"></div>
<span class="t" style="left: 795.25px; top: 425px; font-size: 25px; color: rgb(220, 220, 220); font-weight: 400; -webkit-text-stroke: 0.4px currentcolor; transform-origin: 0px 50%; transform: scaleX(0.88);">S</span>
<span class="t" style="left: 1150px; top: 425px; font-size: 25px; color: rgb(214, 214, 214); font-weight: 400; -webkit-text-stroke: 0.4px currentcolor; transform-origin: 0px 50%; transform: scaleX(0.988);">Assign</span>
<div class="b" style="left:1238px;top:418px;width:37px;height:38px;background:#0f1f3b;border:2px solid #2c3850;border-radius:7px;"></div>
<span class="t" style="left: 1248px; top: 425px; font-size: 25px; color: rgb(220, 220, 220); font-weight: 400; -webkit-text-stroke: 0.4px currentcolor; transform-origin: 0px 50%; transform: scaleX(0.919);">A</span>
<span class="t" style="left: 1640px; top: 425px; font-size: 25px; color: rgb(214, 214, 214); font-weight: 400; -webkit-text-stroke: 0.4px currentcolor; transform-origin: 0px 50%; transform: scaleX(0.956);">Escalate</span>
<div class="b" style="left:1746px;top:418px;width:27px;height:38px;background:#0f1f3b;border:2px solid #2c3850;border-radius:7px;"></div>
<span class="t" style="left: 1756px; top: 425px; font-size: 25px; color: rgb(220, 220, 220); font-weight: 400; -webkit-text-stroke: 0.4px currentcolor; transform-origin: 0px 50%; transform: scaleX(0.93);">!</span>
<div class="b" style="left:170px;top:471px;width:458px;height:56px;background:#1c1c1f;border:2px solid #646468;border-radius:8px;"></div>
<svg style="position:absolute;left:593px;top:495px;color:#c3c6c3;" width="18" height="10" viewBox="0 0 18 10" preserveAspectRatio="none" fill="none" stroke="none"><path d="M0 0 H18 L9 10 Z" fill="#9a9a9c"></path></svg>
<div class="b" style="left:660px;top:471px;width:458px;height:56px;background:#1c1c1f;border:2px solid #646468;border-radius:8px;"></div>
<svg style="position:absolute;left:1083px;top:495px;color:#c3c6c3;" width="18" height="10" viewBox="0 0 18 10" preserveAspectRatio="none" fill="none" stroke="none"><path d="M0 0 H18 L9 10 Z" fill="#9a9a9c"></path></svg>
<div class="b" style="left:1150px;top:471px;width:458px;height:56px;background:#1c1c1f;border:2px solid #646468;border-radius:8px;"></div>
<svg style="position:absolute;left:1573px;top:495px;color:#c3c6c3;" width="18" height="10" viewBox="0 0 18 10" preserveAspectRatio="none" fill="none" stroke="none"><path d="M0 0 H18 L9 10 Z" fill="#9a9a9c"></path></svg>
<div class="b" style="left:1640px;top:471px;width:458px;height:56px;background:#1c1c1f;border:2px solid #646468;border-radius:8px;"></div>
<svg style="position:absolute;left:2063px;top:495px;color:#c3c6c3;" width="18" height="10" viewBox="0 0 18 10" preserveAspectRatio="none" fill="none" stroke="none"><path d="M0 0 H18 L9 10 Z" fill="#9a9a9c"></path></svg>
<div class="b" style="left:188px;top:479px;width:50px;height:40px;background:#e9384f;border-radius:8px;"></div>
<span class="t" style="left: 200px; top: 489px; font-size: 22px; color: rgb(255, 255, 255); font-weight: 700; -webkit-text-stroke: 0.1px currentcolor; transform-origin: 0px 50%; transform: scaleX(0.97);">P1</span>
<span class="t" style="left: 254px; top: 487px; font-size: 27px; color: rgb(216, 216, 216); font-weight: 400; -webkit-text-stroke: 0.4px currentcolor; transform-origin: 0px 50%; transform: scaleX(1.015);">Critical</span>
<div class="b" style="left:676px;top:479px;width:108px;height:39px;background:#0f2914;border-radius:7px;"></div>
<span class="t" style="left: 689px; top: 489px; font-size: 22px; color: rgb(85, 196, 120); font-weight: 700; -webkit-text-stroke: 0.1px currentcolor; transform-origin: 0px 50%; transform: scaleX(0.91);">CLOSED</span>
<div class="b" style="left:1168px;top:475px;width:48px;height:48px;background:#d0d0d0;border-radius:50%;overflow:hidden;"><svg width="48" height="48" viewBox="0 0 48 48" style="position:absolute;left:0;top:0"><circle cx="24" cy="24" r="10.4" fill="#fff"></circle><path d="M19 30 H29 V35 C29 37 31 38 33 38.6 C38 40 41 43 41 50 H7 C7 43 10 40 15 38.6 C17 38 19 37 19 35 Z" fill="#fff"></path></svg></div>
<span class="t" style="left: 1232px; top: 487px; font-size: 27px; color: rgb(216, 216, 216); font-weight: 400; -webkit-text-stroke: 0.4px currentcolor; transform-origin: 0px 50%; transform: scaleX(1.01);">Unassigned</span>
<span class="t" style="left: 1658px; top: 487px; font-size: 27px; color: rgb(124, 124, 126); font-weight: 400; -webkit-text-stroke: 0.4px currentcolor; transform-origin: 0px 50%; transform: scaleX(0.959);">Escalate</span>
<div class="b" style="left:132px;top:584px;width:2396px;height:900px;border:2px solid #37373a;border-radius:18px;"></div>
<span class="t" style="left: 166px; top: 631px; font-size: 30px; color: rgb(210, 210, 210); font-weight: 700; -webkit-text-stroke: 0.1px currentcolor; transform-origin: 0px 50%; transform: scaleX(1.016);">Grouped</span><span class="t" style="left: 300.75px; top: 631px; font-size: 30px; color: rgb(210, 210, 210); font-weight: 700; -webkit-text-stroke: 0.1px currentcolor; transform-origin: 0px 50%; transform: scaleX(1.014);">Alerts</span><span class="t" style="left: 394.73px; top: 631px; font-size: 30px; color: rgb(210, 210, 210); font-weight: 700; -webkit-text-stroke: 0.1px currentcolor; transform-origin: 0px 50%; transform: scaleX(1.04);">and</span><span class="t" style="left: 458.02px; top: 631px; font-size: 30px; color: rgb(210, 210, 210); font-weight: 700; -webkit-text-stroke: 0.1px currentcolor; transform-origin: 0px 50%; transform: scaleX(1.062);">related</span><span class="t" style="left: 570.33px; top: 631px; font-size: 30px; color: rgb(210, 210, 210); font-weight: 700; -webkit-text-stroke: 0.1px currentcolor; transform-origin: 0px 50%; transform: scaleX(1.036);">investigation</span>
<div class="b" style="left:795px;top:617px;width:754px;height:56px;border:2px solid #646468;border-radius:8px;"></div>
<div class="b" style="left:903px;top:614px;width:106px;height:8px;background:#1c1c1f;"></div>
<span class="t" style="left: 909px; top: 604.5px; font-size: 20px; color: rgb(154, 154, 156); font-weight: 400; -webkit-text-stroke: 0.25px currentcolor; transform-origin: 0px 50%; transform: scaleX(0.977);">UTC-04:00</span>
<div class="b" style="left:805px;top:625.5px;width:84px;height:39px;background:#48484c;border-radius:8px;"></div>
<span class="t" style="left: 821px; top: 633px; font-size: 27px; color: rgb(166, 166, 168); font-weight: 400; -webkit-text-stroke: 0.4px currentcolor; transform-origin: 0px 50%; transform: scaleX(1.029);">10m</span>
<span class="t" style="left: 907px; top: 633px; font-size: 27px; color: rgb(212, 212, 212); font-weight: 400; -webkit-text-stroke: 0.4px currentcolor; transform-origin: 0px 50%; transform: scaleX(0.866);">Jul</span><span class="t" style="left: 943.63px; top: 633px; font-size: 27px; color: rgb(212, 212, 212); font-weight: 400; -webkit-text-stroke: 0.4px currentcolor; transform-origin: 0px 50%; transform: scaleX(0.978);">31,</span><span class="t" style="left: 987.09px; top: 633px; font-size: 27px; color: rgb(212, 212, 212); font-weight: 400; -webkit-text-stroke: 0.4px currentcolor; transform-origin: 0px 50%; transform: scaleX(0.982);">4:15</span><span class="t" style="left: 1045.44px; top: 633px; font-size: 27px; color: rgb(212, 212, 212); font-weight: 400; -webkit-text-stroke: 0.4px currentcolor; transform-origin: 0px 50%; transform: scaleX(1.037);">am</span><span class="t" style="left: 1091.09px; top: 633px; font-size: 27px; color: rgb(212, 212, 212); font-weight: 400; -webkit-text-stroke: 0.4px currentcolor; transform-origin: 0px 50%; transform: scaleX(0.866);">–</span><span class="t" style="left: 1110.86px; top: 633px; font-size: 27px; color: rgb(212, 212, 212); font-weight: 400; -webkit-text-stroke: 0.4px currentcolor; transform-origin: 0px 50%; transform: scaleX(0.866);">Jul</span><span class="t" style="left: 1147.5px; top: 633px; font-size: 27px; color: rgb(212, 212, 212); font-weight: 400; -webkit-text-stroke: 0.4px currentcolor; transform-origin: 0px 50%; transform: scaleX(0.978);">31,</span><span class="t" style="left: 1190.97px; top: 633px; font-size: 27px; color: rgb(212, 212, 212); font-weight: 400; -webkit-text-stroke: 0.4px currentcolor; transform-origin: 0px 50%; transform: scaleX(0.982);">4:25</span><span class="t" style="left: 1249.31px; top: 633px; font-size: 27px; color: rgb(212, 212, 212); font-weight: 400; -webkit-text-stroke: 0.4px currentcolor; transform-origin: 0px 50%; transform: scaleX(1.037);">am</span>
<svg style="position:absolute;left:1513px;top:641px;color:#c3c6c3;" width="18" height="10" viewBox="0 0 18 10" preserveAspectRatio="none" fill="none" stroke="none"><path d="M0 0 H18 L9 10 Z" fill="#9a9a9c"></path></svg>
<div class="b" style="left:1565px;top:617px;width:56px;height:56px;background:#242427;border:2px solid #2b2b2e;border-radius:8px;"></div>
<svg style="position:absolute;left:1579px;top:631.5px;color:#c3c6c3;" width="28" height="28" viewBox="0 0 28 28" preserveAspectRatio="none" fill="none" stroke="none"><path d="M5.5 7.5 A12 12 0 1 1 2.5 17" stroke="#58585b" stroke-width="2.8" fill="none" stroke-linecap="round"></path><path d="M3 1.5 V9 H10.5" stroke="#58585b" stroke-width="2.8" fill="none" stroke-linecap="round" stroke-linejoin="round"></path></svg>
<span class="t" style="left: 1653px; top: 633px; font-size: 27px; color: rgb(218, 218, 218); font-weight: 400; -webkit-text-stroke: 0.4px currentcolor; transform-origin: 0px 50%; transform: scaleX(1.028);">Filter</span><span class="t" style="left: 1721.45px; top: 633px; font-size: 27px; color: rgb(218, 218, 218); font-weight: 400; -webkit-text-stroke: 0.4px currentcolor; transform-origin: 0px 50%; transform: scaleX(0.991);">by:</span>
<div class="b" style="left:1773px;top:617px;width:260px;height:56px;border:2px solid #646468;border-radius:8px;"></div>
<span class="t" style="left: 1791px; top: 633px; font-size: 27px; color: rgb(122, 122, 124); font-weight: 400; -webkit-text-stroke: 0.4px currentcolor; transform-origin: 0px 50%; transform: scaleX(0.962);">Select</span><span class="t" style="left: 1869.92px; top: 633px; font-size: 27px; color: rgb(122, 122, 124); font-weight: 400; -webkit-text-stroke: 0.4px currentcolor; transform-origin: 0px 50%; transform: scaleX(1.027);">tags</span>
<svg style="position:absolute;left:1998px;top:641px;color:#c3c6c3;" width="18" height="10" viewBox="0 0 18 10" preserveAspectRatio="none" fill="none" stroke="none"><path d="M0 0 H18 L9 10 Z" fill="#9a9a9c"></path></svg>
<div class="b" style="left:2147px;top:617px;width:194px;height:56px;background:#0a1729;border-radius:9px;"></div>
<svg style="position:absolute;left:2171px;top:632px;color:#c3c6c3;" width="28" height="26" viewBox="0 0 28 26" preserveAspectRatio="none" fill="none" stroke="none"><path d="M2 2 V23.6 H27" stroke="#4290dc" stroke-width="2.2" fill="none"></path><path d="M3.5 20.3 C9 19 10.5 1.7 14.8 1.7 C19 1.7 20.5 17.5 26.7 18.8" stroke="#4290dc" stroke-width="2.4" fill="none" stroke-linecap="round"></path><path d="M4.9 8.3 H21.4" stroke="#4290dc" stroke-width="2" fill="none"></path><rect x="24.2" y="7.2" width="2.4" height="2.2" fill="#4290dc"></rect><rect x="24.2" y="14" width="2.4" height="2.2" fill="#4290dc"></rect></svg>
<span class="t" style="left: 2215px; top: 633px; font-size: 27px; color: rgb(66, 144, 220); font-weight: 400; -webkit-text-stroke: 0.4px currentcolor; transform-origin: 0px 50%; transform: scaleX(1.032);">Timeline</span>
<svg style="position:absolute;left:2366px;top:632px;color:#c3c6c3;" width="26" height="26" viewBox="0 0 26 26" preserveAspectRatio="none" fill="none" stroke="none"><rect x="1.5" y="1.5" width="23" height="23" stroke="#98989a" stroke-width="3" fill="none"></rect><path d="M1.5 8.6 H24.5 M9.2 1.5 V24.5" stroke="#98989a" stroke-width="2.8" fill="none"></path></svg>
<span class="t" style="left: 2408px; top: 633px; font-size: 27px; color: rgb(152, 152, 154); font-weight: 400; -webkit-text-stroke: 0.4px currentcolor; transform-origin: 0px 50%; transform: scaleX(0.997);">Table</span>
<div class="b" style="left:184px;top:735px;width:28px;height:28px;border:2px solid #5e5e62;border-radius:5px;"></div>
<span class="t" style="left: 230px; top: 737px; font-size: 27px; color: rgb(212, 212, 212); font-weight: 400; -webkit-text-stroke: 0.4px currentcolor; transform-origin: 0px 50%; transform: scaleX(1.011);">Showing</span><span class="t" style="left: 341.52px; top: 737px; font-size: 27px; color: rgb(212, 212, 212); font-weight: 700; -webkit-text-stroke: 0.2px currentcolor; transform-origin: 0px 50%; transform: scaleX(1.015);">1–7</span><span class="t" style="left: 394.02px; top: 737px; font-size: 27px; color: rgb(212, 212, 212); font-weight: 400; -webkit-text-stroke: 0.4px currentcolor; transform-origin: 0px 50%; transform: scaleX(1.096);">of</span><span class="t" style="left: 425.47px; top: 737px; font-size: 27px; color: rgb(212, 212, 212); font-weight: 700; -webkit-text-stroke: 0.2px currentcolor; transform-origin: 0px 50%; transform: scaleX(0.99);">7</span><span class="t" style="left: 448.09px; top: 737px; font-size: 27px; color: rgb(212, 212, 212); font-weight: 400; -webkit-text-stroke: 0.4px currentcolor; transform-origin: 0px 50%; transform: scaleX(1.038);">alerts</span>
<div class="b" style="left:166px;top:793px;width:936px;height:548px;border:2px solid #38383b;border-right:none;"></div>
<div class="b" style="left:184px;top:819px;width:28px;height:28px;border:2px solid #5e5e62;border-radius:5px;"></div>
<div class="b" style="left:223.5px;top:812.5px;width:8.5px;height:44px;background:#8fdc9c;border-radius:4.5px;"></div>
<svg style="position:absolute;left:240px;top:810.8px;color:#c3c6c3;" width="48" height="44.5" viewBox="0 0 48 44.5" preserveAspectRatio="none" fill="none" stroke="none"><path d="M24 0 C30.5 0 34.4 5 34.4 12.5 C34.4 18.5 32.3 22.5 29.8 25.2 C29.3 28.4 30.3 30.3 33.5 31.8 L42.5 35.6 C46.5 37.3 48 40 48 44.5 H0 C0 40 1.5 37.3 5.5 35.6 L14.5 31.8 C17.7 30.3 18.7 28.4 18.2 25.2 C15.7 22.5 13.6 18.5 13.6 12.5 C13.6 5 17.5 0 24 0 Z" fill="#c4c4c4"></path></svg>
<span class="t" style="left: 304px; top: 820.5px; font-size: 27px; color: rgb(216, 216, 216); font-weight: 400; -webkit-text-stroke: 0.4px currentcolor; transform-origin: 0px 50%; transform: scaleX(1.026);">ShoppingCartController#apply_coupon</span><span class="t" style="left: 791.17px; top: 820.5px; font-size: 27px; color: rgb(216, 216, 216); font-weight: 400; -webkit-text-stroke: 0.4px currentcolor; transform-origin: 0px 50%; transform: scaleX(1.15);">|</span><span class="t" style="left: 809.13px; top: 820.5px; font-size: 27px; color: rgb(216, 216, 216); font-weight: 400; -webkit-text-stroke: 0.4px currentcolor; transform-origin: 0px 50%; transform: scaleX(1.062);">/validate-promo/</span><span class="t" style="left: 1021.41px; top: 820.5px; font-size: 27px; color: rgb(216, 216, 216); font-weight: 400; -webkit-text-stroke: 0.4px currentcolor; transform-origin: 0px 50%; transform: scaleX(0.929);">er...</span>
<div class="b" style="left:166px;top:871px;width:936px;height:2px;background:#38383b;"></div>
<div class="b" style="left:184px;top:897px;width:28px;height:28px;border:2px solid #5e5e62;border-radius:5px;"></div>
<div class="b" style="left:223.5px;top:890.5px;width:8.5px;height:44px;background:#8fdc9c;border-radius:4.5px;"></div>
<svg style="position:absolute;left:240px;top:887px;color:#c3c6c3;" width="48" height="48" viewBox="0 0 48 48" preserveAspectRatio="none" fill="none" stroke="none"><circle cx="24" cy="24" r="24" fill="#c4c4c4"></circle><path d="M23.4 2.6 C25 7 28 10 27.6 14.5 C28.8 12.5 29.6 10 29.5 7.2 C32.5 11 34.6 16 33.6 20.5 C33.2 22.3 32.5 23.7 31.8 24.8 H16.2 C15 23.2 14.3 21 14.6 18.5 C14.9 16 16 14 16.4 12 C17 13.6 17.6 15.2 18.6 16 C18 13 17 11 17.5 8.6 C18.6 9.8 19.6 11.4 20 13.2 C20.4 9 22.4 6.4 23.4 2.6 Z" fill="#1c1c1f"></path><path d="M9.4 25.4 C11 26 12.5 26.2 14 26.2 H34 C35.5 26.2 37 26 38.6 25.4 C38 28 36.8 30 35 31.2 H13 C11.2 30 10 28 9.4 25.4 Z" fill="#1c1c1f"></path><rect x="13" y="33.4" width="22" height="3.4" fill="#1c1c1f"></rect><path d="M16.8 39 H30.4 C29.6 42.4 27 44.2 23.6 44.2 C20.2 44.2 17.6 42.4 16.8 39 Z" fill="#1c1c1f"></path></svg>
<span class="t" style="left: 304px; top: 898.5px; font-size: 27px; color: rgb(216, 216, 216); font-weight: 400; -webkit-text-stroke: 0.4px currentcolor; transform-origin: 0px 50%; transform: scaleX(1.064);">[TargetDown][firing]</span><span class="t" style="left: 558.3px; top: 898.5px; font-size: 27px; color: rgb(216, 216, 216); font-weight: 400; -webkit-text-stroke: 0.4px currentcolor; transform-origin: 0px 50%; transform: scaleX(1.026);">Prometheus</span><span class="t" style="left: 714.34px; top: 898.5px; font-size: 27px; color: rgb(216, 216, 216); font-weight: 400; -webkit-text-stroke: 0.4px currentcolor; transform-origin: 0px 50%; transform: scaleX(0.932);">-</span><span class="t" style="left: 729.48px; top: 898.5px; font-size: 27px; color: rgb(216, 216, 216); font-weight: 400; -webkit-text-stroke: 0.4px currentcolor; transform-origin: 0px 50%; transform: scaleX(1.061);">promotions-bridge</span><span class="t" style="left: 967.02px; top: 898.5px; font-size: 27px; color: rgb(216, 216, 216); font-weight: 400; -webkit-text-stroke: 0.4px currentcolor; transform-origin: 0px 50%; transform: scaleX(1.049);">down</span>
<div class="b" style="left:166px;top:949px;width:936px;height:2px;background:#38383b;"></div>
<div class="b" style="left:184px;top:975px;width:28px;height:28px;border:2px solid #5e5e62;border-radius:5px;"></div>
<div class="b" style="left:223.5px;top:968.5px;width:8.5px;height:44px;background:#8fdc9c;border-radius:4.5px;"></div>
<div class="b" style="left:242.7px;top:964.8px;width:42.4px;height:48.3px;background:#c4c4c4;"></div><span class="t" style="left: 249.8px; font-size: 47px; color: rgb(28, 28, 31); font-weight: 400; -webkit-text-stroke: 0px; top: 965.8px;">Z</span>
<span class="t" style="left: 304px; top: 976.5px; font-size: 27px; color: rgb(216, 216, 216); font-weight: 400; -webkit-text-stroke: 0.4px currentcolor; transform-origin: 0px 50%; transform: scaleX(1.074);">high</span><span class="t" style="left: 365.59px; top: 976.5px; font-size: 27px; color: rgb(216, 216, 216); font-weight: 400; -webkit-text-stroke: 0.4px currentcolor; transform-origin: 0px 50%; transform: scaleX(1.089);">error</span><span class="t" style="left: 434.44px; top: 976.5px; font-size: 27px; color: rgb(216, 216, 216); font-weight: 400; -webkit-text-stroke: 0.4px currentcolor; transform-origin: 0px 50%; transform: scaleX(1.05);">rate</span><span class="t" style="left: 490.05px; top: 976.5px; font-size: 27px; color: rgb(216, 216, 216); font-weight: 400; -webkit-text-stroke: 0.4px currentcolor; transform-origin: 0px 50%; transform: scaleX(1.085);">in</span><span class="t" style="left: 519.58px; top: 976.5px; font-size: 27px; color: rgb(216, 216, 216); font-weight: 400; -webkit-text-stroke: 0.4px currentcolor; transform-origin: 0px 50%; transform: scaleX(1.023);">requests</span><span class="t" style="left: 632.25px; top: 976.5px; font-size: 27px; color: rgb(216, 216, 216); font-weight: 400; -webkit-text-stroke: 0.4px currentcolor; transform-origin: 0px 50%; transform: scaleX(0.931);">-</span><span class="t" style="left: 647.38px; top: 976.5px; font-size: 27px; color: rgb(216, 216, 216); font-weight: 400; -webkit-text-stroke: 0.4px currentcolor; transform-origin: 0px 50%; transform: scaleX(1.032);">super-promos-api</span>
<div class="b" style="left:166px;top:1027px;width:936px;height:2px;background:#38383b;"></div>
<div class="b" style="left:184px;top:1053px;width:28px;height:28px;border:2px solid #5e5e62;border-radius:5px;"></div>
<div class="b" style="left:223.5px;top:1046.5px;width:8.5px;height:44px;background:#8fdc9c;border-radius:4.5px;"></div>
<svg style="position:absolute;left:240px;top:1044.8px;color:#c3c6c3;" width="48" height="44.5" viewBox="0 0 48 44.5" preserveAspectRatio="none" fill="none" stroke="none"><path d="M24 0 C30.5 0 34.4 5 34.4 12.5 C34.4 18.5 32.3 22.5 29.8 25.2 C29.3 28.4 30.3 30.3 33.5 31.8 L42.5 35.6 C46.5 37.3 48 40 48 44.5 H0 C0 40 1.5 37.3 5.5 35.6 L14.5 31.8 C17.7 30.3 18.7 28.4 18.2 25.2 C15.7 22.5 13.6 18.5 13.6 12.5 C13.6 5 17.5 0 24 0 Z" fill="#c4c4c4"></path></svg>
<span class="t" style="left: 304px; top: 1054.5px; font-size: 27px; color: rgb(216, 216, 216); font-weight: 400; -webkit-text-stroke: 0.4px currentcolor; transform-origin: 0px 50%; transform: scaleX(1.012);">Increased</span><span class="t" style="left: 430.69px; top: 1054.5px; font-size: 27px; color: rgb(216, 216, 216); font-weight: 400; -webkit-text-stroke: 0.4px currentcolor; transform-origin: 0px 50%; transform: scaleX(1.089);">error</span><span class="t" style="left: 499.53px; top: 1054.5px; font-size: 27px; color: rgb(216, 216, 216); font-weight: 400; -webkit-text-stroke: 0.4px currentcolor; transform-origin: 0px 50%; transform: scaleX(1.05);">rate</span><span class="t" style="left: 555.16px; top: 1054.5px; font-size: 27px; color: rgb(216, 216, 216); font-weight: 400; -webkit-text-stroke: 0.4px currentcolor; transform-origin: 0px 50%; transform: scaleX(1.035);">detected</span><span class="t" style="left: 669.14px; top: 1054.5px; font-size: 27px; color: rgb(216, 216, 216); font-weight: 400; -webkit-text-stroke: 0.4px currentcolor; transform-origin: 0px 50%; transform: scaleX(0.932);">-</span><span class="t" style="left: 684.27px; top: 1054.5px; font-size: 27px; color: rgb(216, 216, 216); font-weight: 400; -webkit-text-stroke: 0.4px currentcolor; transform-origin: 0px 50%; transform: scaleX(1.044);">promocode-validator</span>
<div class="b" style="left:166px;top:1105px;width:936px;height:2px;background:#38383b;"></div>
<div class="b" style="left:184px;top:1131px;width:28px;height:28px;border:2px solid #5e5e62;border-radius:5px;"></div>
<div class="b" style="left:223.5px;top:1124.5px;width:8.5px;height:44px;background:#8fdc9c;border-radius:4.5px;"></div>
<svg style="position:absolute;left:0;top:0" width="300" height="1440" viewBox="0 0 300 1440"><g transform="translate(224,1116.8) scale(0.805,0.79)"><ellipse cx="31.3" cy="17.8" rx="5.7" ry="7.7" transform="rotate(-18 31.3 17.8)" fill="#c4c4c4"></ellipse><path d="M35.5 12.5 C41 9.5 49 10.5 54 13 L57.3 8.3 C61.5 8.3 64.8 12.5 64.2 17.6 L61.3 18.3 C63 23 64.8 28 64.2 32 C63.6 36 61 38.2 58 38.6 L47 41 L48 52 L42.5 57 C41 62 36.5 65.6 32.5 64.8 C28.3 64 26.3 59 28.3 54.5 C30 51 33.5 49 35 44 C36 40 33.5 35 32.5 30 C31.5 25 33 17 35.5 12.5 Z" fill="#c4c4c4"></path><path d="M36.6 14.2 C38.6 18 38.2 23 35 26.2" stroke="#1c1c1f" stroke-width="1.7" fill="none"></path><path d="M31.5 50.8 C36 47.8 41.5 50.5 43 57" stroke="#1c1c1f" stroke-width="1.3" fill="none"></path><path d="M57.6 9 C58.6 11.5 59.6 14.5 61.6 17.8" stroke="#1c1c1f" stroke-width="1.1" fill="none"></path><path d="M42.6 39.2 L74.2 35.6 L75.4 56 L47 61.8 Z" fill="#1c1c1f"></path><path d="M44.1 40.2 L73.6 36.6 L74.7 55.4 L48.1 60.6 Z" fill="#c4c4c4"></path><path d="M49.4 57.8 L53.6 51.1 L59.1 52.2 L63.6 45 L68 47.2 L72.2 41.1 L73.2 54.3 Z" fill="#1c1c1f"></path><ellipse cx="45.8" cy="24.4" rx="2.7" ry="2" transform="rotate(-20 45.8 24.4)" fill="#1c1c1f"></ellipse><ellipse cx="58" cy="22" rx="1.5" ry="2.2" transform="rotate(-15 58 22)" fill="#1c1c1f"></ellipse><ellipse cx="59.2" cy="32" rx="2.9" ry="2" transform="rotate(-12 59.2 32)" fill="#1c1c1f"></ellipse><path d="M44 35.8 C47 39.3 53 40.4 57.3 38.4 C58.6 37.8 59.2 36.8 59.2 35.6" stroke="#1c1c1f" stroke-width="1.2" fill="none"></path></g></svg>
<span class="t" style="left: 304px; top: 1132.5px; font-size: 27px; color: rgb(216, 216, 216); font-weight: 400; -webkit-text-stroke: 0.4px currentcolor; transform-origin: 0px 50%; transform: scaleX(1.045);">Abnormal</span><span class="t" style="left: 431.5px; top: 1132.5px; font-size: 27px; color: rgb(216, 216, 216); font-weight: 400; -webkit-text-stroke: 0.4px currentcolor; transform-origin: 0px 50%; transform: scaleX(1.014);">change</span><span class="t" style="left: 528.11px; top: 1132.5px; font-size: 27px; color: rgb(216, 216, 216); font-weight: 400; -webkit-text-stroke: 0.4px currentcolor; transform-origin: 0px 50%; transform: scaleX(1.085);">in</span><span class="t" style="left: 557.64px; top: 1132.5px; font-size: 27px; color: rgb(216, 216, 216); font-weight: 400; -webkit-text-stroke: 0.4px currentcolor; transform-origin: 0px 50%; transform: scaleX(1.019);">latency</span><span class="t" style="left: 651.56px; top: 1132.5px; font-size: 27px; color: rgb(216, 216, 216); font-weight: 400; -webkit-text-stroke: 0.4px currentcolor; transform-origin: 0px 50%; transform: scaleX(0.932);">-</span><span class="t" style="left: 666.69px; top: 1132.5px; font-size: 27px; color: rgb(216, 216, 216); font-weight: 400; -webkit-text-stroke: 0.4px currentcolor; transform-origin: 0px 50%; transform: scaleX(1.061);">promotions-bridge</span>
<div class="b" style="left:166px;top:1183px;width:936px;height:2px;background:#38383b;"></div>
<div class="b" style="left:184px;top:1209px;width:28px;height:28px;border:2px solid #5e5e62;border-radius:5px;"></div>
<div class="b" style="left:223.5px;top:1202.5px;width:8.5px;height:44px;background:#8fdc9c;border-radius:4.5px;"></div>
<svg style="position:absolute;left:0;top:0" width="300" height="1440" viewBox="0 0 300 1440"><g transform="translate(224,1194.8) scale(0.805,0.79)"><ellipse cx="31.3" cy="17.8" rx="5.7" ry="7.7" transform="rotate(-18 31.3 17.8)" fill="#c4c4c4"></ellipse><path d="M35.5 12.5 C41 9.5 49 10.5 54 13 L57.3 8.3 C61.5 8.3 64.8 12.5 64.2 17.6 L61.3 18.3 C63 23 64.8 28 64.2 32 C63.6 36 61 38.2 58 38.6 L47 41 L48 52 L42.5 57 C41 62 36.5 65.6 32.5 64.8 C28.3 64 26.3 59 28.3 54.5 C30 51 33.5 49 35 44 C36 40 33.5 35 32.5 30 C31.5 25 33 17 35.5 12.5 Z" fill="#c4c4c4"></path><path d="M36.6 14.2 C38.6 18 38.2 23 35 26.2" stroke="#1c1c1f" stroke-width="1.7" fill="none"></path><path d="M31.5 50.8 C36 47.8 41.5 50.5 43 57" stroke="#1c1c1f" stroke-width="1.3" fill="none"></path><path d="M57.6 9 C58.6 11.5 59.6 14.5 61.6 17.8" stroke="#1c1c1f" stroke-width="1.1" fill="none"></path><path d="M42.6 39.2 L74.2 35.6 L75.4 56 L47 61.8 Z" fill="#1c1c1f"></path><path d="M44.1 40.2 L73.6 36.6 L74.7 55.4 L48.1 60.6 Z" fill="#c4c4c4"></path><path d="M49.4 57.8 L53.6 51.1 L59.1 52.2 L63.6 45 L68 47.2 L72.2 41.1 L73.2 54.3 Z" fill="#1c1c1f"></path><ellipse cx="45.8" cy="24.4" rx="2.7" ry="2" transform="rotate(-20 45.8 24.4)" fill="#1c1c1f"></ellipse><ellipse cx="58" cy="22" rx="1.5" ry="2.2" transform="rotate(-15 58 22)" fill="#1c1c1f"></ellipse><ellipse cx="59.2" cy="32" rx="2.9" ry="2" transform="rotate(-12 59.2 32)" fill="#1c1c1f"></ellipse><path d="M44 35.8 C47 39.3 53 40.4 57.3 38.4 C58.6 37.8 59.2 36.8 59.2 35.6" stroke="#1c1c1f" stroke-width="1.2" fill="none"></path></g></svg>
<span class="t" style="left: 304px; top: 1210.5px; font-size: 27px; color: rgb(216, 216, 216); font-weight: 400; -webkit-text-stroke: 0.4px currentcolor; transform-origin: 0px 50%; transform: scaleX(1.045);">Abnormal</span><span class="t" style="left: 431.5px; top: 1210.5px; font-size: 27px; color: rgb(216, 216, 216); font-weight: 400; -webkit-text-stroke: 0.4px currentcolor; transform-origin: 0px 50%; transform: scaleX(1.014);">change</span><span class="t" style="left: 528.11px; top: 1210.5px; font-size: 27px; color: rgb(216, 216, 216); font-weight: 400; -webkit-text-stroke: 0.4px currentcolor; transform-origin: 0px 50%; transform: scaleX(1.085);">in</span><span class="t" style="left: 557.64px; top: 1210.5px; font-size: 27px; color: rgb(216, 216, 216); font-weight: 400; -webkit-text-stroke: 0.4px currentcolor; transform-origin: 0px 50%; transform: scaleX(1.019);">latency</span><span class="t" style="left: 651.56px; top: 1210.5px; font-size: 27px; color: rgb(216, 216, 216); font-weight: 400; -webkit-text-stroke: 0.4px currentcolor; transform-origin: 0px 50%; transform: scaleX(0.932);">-</span><span class="t" style="left: 666.69px; top: 1210.5px; font-size: 27px; color: rgb(216, 216, 216); font-weight: 400; -webkit-text-stroke: 0.4px currentcolor; transform-origin: 0px 50%; transform: scaleX(1.044);">promocode-validator</span>
<div class="b" style="left:166px;top:1261px;width:936px;height:2px;background:#38383b;"></div>
<div class="b" style="left:184px;top:1287px;width:28px;height:28px;border:2px solid #5e5e62;border-radius:5px;"></div>
<div class="b" style="left:223.5px;top:1280.5px;width:8.5px;height:44px;background:#8fdc9c;border-radius:4.5px;"></div>
<svg style="position:absolute;left:240px;top:1281.5px;color:#c3c6c3;" width="47" height="38" viewBox="0 0 47 38" preserveAspectRatio="none" fill="none" stroke="none"><path d="M0 11.9 C8 7 18 3.5 28 2.3 L30.3 5.2 C36 4.5 42 3 47 0.4 C45 7 40 12 34 14.5 C28 17 22 18.3 19 18.6 C12 16 6 13.5 0 11.9 Z" fill="#c4c4c4"></path><path d="M18.3 20.7 C28 21.5 38 20 46.7 17.5 C42 22 35 25.5 22.5 28 Z" fill="#c4c4c4"></path><path d="M23.9 30.3 C30 29.5 35 27.5 39.1 24.4 C35.5 30 31 34.5 26.3 37.8 Z" fill="#c4c4c4"></path></svg>
<span class="t" style="left: 304px; top: 1288.5px; font-size: 27px; color: rgb(216, 216, 216); font-weight: 400; -webkit-text-stroke: 0.4px currentcolor; transform-origin: 0px 50%; transform: scaleX(1.012);">Increased</span><span class="t" style="left: 430.69px; top: 1288.5px; font-size: 27px; color: rgb(216, 216, 216); font-weight: 400; -webkit-text-stroke: 0.4px currentcolor; transform-origin: 0px 50%; transform: scaleX(1.019);">latency</span><span class="t" style="left: 524.61px; top: 1288.5px; font-size: 27px; color: rgb(216, 216, 216); font-weight: 400; -webkit-text-stroke: 0.4px currentcolor; transform-origin: 0px 50%; transform: scaleX(0.931);">-</span><span class="t" style="left: 539.73px; top: 1288.5px; font-size: 27px; color: rgb(216, 216, 216); font-weight: 400; -webkit-text-stroke: 0.4px currentcolor; transform-origin: 0px 50%; transform: scaleX(1.059);">promo-db</span>
<div class="b" style="left:1102px;top:701px;width:176px;height:42px;background:#566078;"></div>
<span class="t" style="left: 1115px; top: 712px; font-size: 22px; color: rgb(240, 240, 240); font-weight: 400; -webkit-text-stroke: 0.25px currentcolor; transform-origin: 0px 50%; transform: scaleX(0.899);">Jul</span><span class="t" style="left: 1145.98px; top: 712px; font-size: 22px; color: rgb(240, 240, 240); font-weight: 400; -webkit-text-stroke: 0.25px currentcolor; transform-origin: 0px 50%; transform: scaleX(1.016);">31,</span><span class="t" style="left: 1182.78px; top: 712px; font-size: 22px; color: rgb(240, 240, 240); font-weight: 400; -webkit-text-stroke: 0.25px currentcolor; transform-origin: 0px 50%; transform: scaleX(1.019);">4:15</span><span class="t" style="left: 1232.14px; top: 712px; font-size: 22px; color: rgb(240, 240, 240); font-weight: 400; -webkit-text-stroke: 0.25px currentcolor; transform-origin: 0px 50%; transform: scaleX(1.078);">am</span>
<div class="b" style="left:2314px;top:701px;width:176px;height:42px;background:#566078;"></div>
<span class="t" style="left: 2327px; top: 712px; font-size: 22px; color: rgb(240, 240, 240); font-weight: 400; -webkit-text-stroke: 0.25px currentcolor; transform-origin: 0px 50%; transform: scaleX(0.899);">Jul</span><span class="t" style="left: 2357.98px; top: 712px; font-size: 22px; color: rgb(240, 240, 240); font-weight: 400; -webkit-text-stroke: 0.25px currentcolor; transform-origin: 0px 50%; transform: scaleX(1.016);">31,</span><span class="t" style="left: 2394.78px; top: 712px; font-size: 22px; color: rgb(240, 240, 240); font-weight: 400; -webkit-text-stroke: 0.25px currentcolor; transform-origin: 0px 50%; transform: scaleX(1.019);">4:25</span><span class="t" style="left: 2444.14px; top: 712px; font-size: 22px; color: rgb(240, 240, 240); font-weight: 400; -webkit-text-stroke: 0.25px currentcolor; transform-origin: 0px 50%; transform: scaleX(1.078);">am</span>
<div class="b" style="left:1102px;top:743px;width:2px;height:52px;background:#566078;"></div>
<div class="b" style="left:2488px;top:743px;width:2px;height:597px;background:#566078;"></div>
<span class="t" style="left: 1105px; top: 760px; font-size: 20px; color: rgb(210, 210, 210); font-weight: 400; -webkit-text-stroke: 0.25px currentcolor; transform-origin: 0px 50%; transform: scaleX(1.029);">15</span>
<span class="t" style="left: 1212.6px; top: 760px; font-size: 20px; color: rgb(210, 210, 210); font-weight: 400; -webkit-text-stroke: 0.25px currentcolor; transform-origin: 0px 50%; transform: scaleX(1.021);">04:16</span>
<div class="b" style="left:1237.1px;top:783px;width:2px;height:10px;background:#9a9a9a;"></div>
<span class="t" style="left: 1348.9px; top: 760px; font-size: 20px; color: rgb(210, 210, 210); font-weight: 400; -webkit-text-stroke: 0.25px currentcolor; transform-origin: 0px 50%; transform: scaleX(1.021);">04:17</span>
<div class="b" style="left:1373.4px;top:783px;width:2px;height:10px;background:#9a9a9a;"></div>
<span class="t" style="left: 1485.3px; top: 760px; font-size: 20px; color: rgb(210, 210, 210); font-weight: 400; -webkit-text-stroke: 0.25px currentcolor; transform-origin: 0px 50%; transform: scaleX(1.021);">04:18</span>
<div class="b" style="left:1509.8px;top:783px;width:2px;height:10px;background:#9a9a9a;"></div>
<span class="t" style="left: 1621.6px; top: 760px; font-size: 20px; color: rgb(210, 210, 210); font-weight: 400; -webkit-text-stroke: 0.25px currentcolor; transform-origin: 0px 50%; transform: scaleX(1.021);">04:19</span>
<div class="b" style="left:1646.1px;top:783px;width:2px;height:10px;background:#9a9a9a;"></div>
<span class="t" style="left: 1757.9px; top: 760px; font-size: 20px; color: rgb(210, 210, 210); font-weight: 400; -webkit-text-stroke: 0.25px currentcolor; transform-origin: 0px 50%; transform: scaleX(1.021);">04:20</span>
<div class="b" style="left:1782.4px;top:783px;width:2px;height:10px;background:#9a9a9a;"></div>
<span class="t" style="left: 1894.2px; top: 760px; font-size: 20px; color: rgb(210, 210, 210); font-weight: 400; -webkit-text-stroke: 0.25px currentcolor; transform-origin: 0px 50%; transform: scaleX(1.021);">04:21</span>
<div class="b" style="left:1918.7px;top:783px;width:2px;height:10px;background:#9a9a9a;"></div>
<span class="t" style="left: 2030.5px; top: 760px; font-size: 20px; color: rgb(210, 210, 210); font-weight: 400; -webkit-text-stroke: 0.25px currentcolor; transform-origin: 0px 50%; transform: scaleX(1.021);">04:22</span>
<div class="b" style="left:2055.0px;top:783px;width:2px;height:10px;background:#9a9a9a;"></div>
<span class="t" style="left: 2166.9px; top: 760px; font-size: 20px; color: rgb(210, 210, 210); font-weight: 400; -webkit-text-stroke: 0.25px currentcolor; transform-origin: 0px 50%; transform: scaleX(1.021);">04:23</span>
<div class="b" style="left:2191.4px;top:783px;width:2px;height:10px;background:#9a9a9a;"></div>
<span class="t" style="left: 2303.2px; top: 760px; font-size: 20px; color: rgb(210, 210, 210); font-weight: 400; -webkit-text-stroke: 0.25px currentcolor; transform-origin: 0px 50%; transform: scaleX(1.021);">04:24</span>
<div class="b" style="left:2327.7px;top:783px;width:2px;height:10px;background:#9a9a9a;"></div>
<div class="b" style="left:2430px;top:755px;width:59px;height:30px;overflow:hidden;"><span class="t" style="left: 9.5px; top: 5px; font-size: 20px; color: rgb(210, 210, 210); font-weight: 400; -webkit-text-stroke: 0.25px currentcolor; transform-origin: 0px 50%; transform: scaleX(1.021);">04:25</span></div>
<div class="b" style="left:2464.0px;top:783px;width:2px;height:10px;background:#9a9a9a;"></div>
<div class="b" style="left:1102px;top:792px;width:1387px;height:2.5px;background:#9a9a9a;"></div>
<div class="b" style="left:1102px;top:795px;width:266px;height:76px;background:#e2564b;"></div>
<div class="b" style="left:1368px;top:795px;width:113px;height:76px;background:#ecb255;"></div>
<div class="b" style="left:1481px;top:795px;width:1008px;height:76px;background:#98dda2;"></div>
<div class="b" style="left:1102px;top:873px;width:22px;height:76px;background:#272727;"></div>
<div class="b" style="left:1124px;top:873px;width:219px;height:76px;background:#e2564b;"></div>
<div class="b" style="left:1343px;top:873px;width:1146px;height:76px;background:#98dda2;"></div>
<div class="b" style="left:1102px;top:871px;width:1387px;height:2px;background:#060606;"></div>
<div class="b" style="left:1102px;top:951px;width:36px;height:76px;background:#272727;"></div>
<div class="b" style="left:1138px;top:951px;width:307px;height:76px;background:#e2564b;"></div>
<div class="b" style="left:1445px;top:951px;width:1044px;height:76px;background:#98dda2;"></div>
<div class="b" style="left:1102px;top:949px;width:1387px;height:2px;background:#060606;"></div>
<div class="b" style="left:1102px;top:1029px;width:41px;height:76px;background:#272727;"></div>
<div class="b" style="left:1143px;top:1029px;width:223px;height:76px;background:#e2564b;"></div>
<div class="b" style="left:1366px;top:1029px;width:145px;height:76px;background:#ecb255;"></div>
<div class="b" style="left:1511px;top:1029px;width:978px;height:76px;background:#98dda2;"></div>
<div class="b" style="left:1102px;top:1027px;width:1387px;height:2px;background:#060606;"></div>
<div class="b" style="left:1102px;top:1107px;width:48px;height:76px;background:#272727;"></div>
<div class="b" style="left:1150px;top:1107px;width:243px;height:76px;background:#e2564b;"></div>
<div class="b" style="left:1393px;top:1107px;width:45px;height:76px;background:#ecb255;"></div>
<div class="b" style="left:1438px;top:1107px;width:1051px;height:76px;background:#98dda2;"></div>
<div class="b" style="left:1102px;top:1105px;width:1387px;height:2px;background:#060606;"></div>
<div class="b" style="left:1102px;top:1185px;width:95px;height:76px;background:#272727;"></div>
<div class="b" style="left:1197px;top:1185px;width:255px;height:76px;background:#e2564b;"></div>
<div class="b" style="left:1452px;top:1185px;width:1037px;height:76px;background:#98dda2;"></div>
<div class="b" style="left:1102px;top:1183px;width:1387px;height:2px;background:#060606;"></div>
<div class="b" style="left:1102px;top:1263px;width:102px;height:75.5px;background:#272727;"></div>
<div class="b" style="left:1204px;top:1263px;width:255px;height:75.5px;background:#e2564b;"></div>
<div class="b" style="left:1459px;top:1263px;width:1030px;height:75.5px;background:#98dda2;"></div>
<div class="b" style="left:1102px;top:1261px;width:1387px;height:2px;background:#060606;"></div>
<div class="b" style="left:2488px;top:743px;width:2px;height:597px;background:#566078;"></div>
<div class="b" style="left:194px;top:1368px;width:22px;height:22px;background:#98dda2;border-radius:4px;"></div>
<span class="t" style="left: 228px; top: 1369px; font-size: 23px; color: rgb(210, 210, 210); font-weight: 400; -webkit-text-stroke: 0.25px currentcolor; transform-origin: 0px 50%; transform: scaleX(0.985);">Ok</span>
<div class="b" style="left:289px;top:1368px;width:22px;height:22px;background:#ecb255;border-radius:4px;"></div>
<span class="t" style="left: 323px; top: 1369px; font-size: 23px; color: rgb(210, 210, 210); font-weight: 400; -webkit-text-stroke: 0.25px currentcolor; transform-origin: 0px 50%; transform: scaleX(1.017);">Warn</span>
<div class="b" style="left:410px;top:1368px;width:22px;height:22px;background:#e2564b;border-radius:4px;"></div>
<span class="t" style="left: 444px; top: 1369px; font-size: 23px; color: rgb(210, 210, 210); font-weight: 400; -webkit-text-stroke: 0.25px currentcolor; transform-origin: 0px 50%; transform: scaleX(1.024);">Error</span>
<div class="b" style="left:2165px;top:1361px;width:48px;height:48px;background:#38383b;border:2px solid #5a5a5d;border-radius:8px;"></div>
<div class="b" style="left:2229px;top:1361px;width:48px;height:48px;background:#202023;border:2px solid #2a2a2d;border-radius:8px;"></div>
<div class="b" style="left:2293px;top:1361px;width:196px;height:48px;background:#202023;border:2px solid #2a2a2d;border-radius:8px;"></div>
<svg style="position:absolute;left:2177px;top:1373px;color:#c3c6c3;" width="24" height="24" viewBox="0 0 24 24" preserveAspectRatio="none" fill="none" stroke="none"><circle cx="10" cy="10" r="8.5" stroke="#b0b0b0" stroke-width="2.4" fill="none"></circle><path d="M16.5 16.5 L23 23" stroke="#b0b0b0" stroke-width="2.6" stroke-linecap="round"></path><path d="M5.5 10 H14.5 M10 5.5 V14.5" stroke="#b0b0b0" stroke-width="2.4"></path></svg>
<svg style="position:absolute;left:2241px;top:1373px;color:#c3c6c3;" width="24" height="24" viewBox="0 0 24 24" preserveAspectRatio="none" fill="none" stroke="none"><circle cx="10" cy="10" r="8.5" stroke="#58585b" stroke-width="2.4" fill="none"></circle><path d="M16.5 16.5 L23 23" stroke="#58585b" stroke-width="2.6" stroke-linecap="round"></path><path d="M5.5 10 H14.5" stroke="#58585b" stroke-width="2.4"></path></svg>
<svg style="position:absolute;left:2313px;top:1373px;color:#c3c6c3;" width="24" height="24" viewBox="0 0 24 24" preserveAspectRatio="none" fill="none" stroke="none"><path d="M4.5 6.5 A10.5 10.5 0 1 1 2 15" stroke="#58585b" stroke-width="2.6" fill="none" stroke-linecap="round"></path><path d="M2.5 1.5 V8 H9" stroke="#58585b" stroke-width="2.6" fill="none" stroke-linecap="round" stroke-linejoin="round"></path></svg>
<span class="t" style="left: 2351px; top: 1373px; font-size: 25px; color: rgb(88, 88, 91); font-weight: 400; -webkit-text-stroke: 0.4px currentcolor; transform-origin: 0px 50%; transform: scaleX(0.952);">Reset</span><span class="t" style="left: 2419.39px; top: 1373px; font-size: 25px; color: rgb(88, 88, 91); font-weight: 400; -webkit-text-stroke: 0.4px currentcolor; transform-origin: 0px 50%; transform: scaleX(0.977);">View</span>
</body></html>
